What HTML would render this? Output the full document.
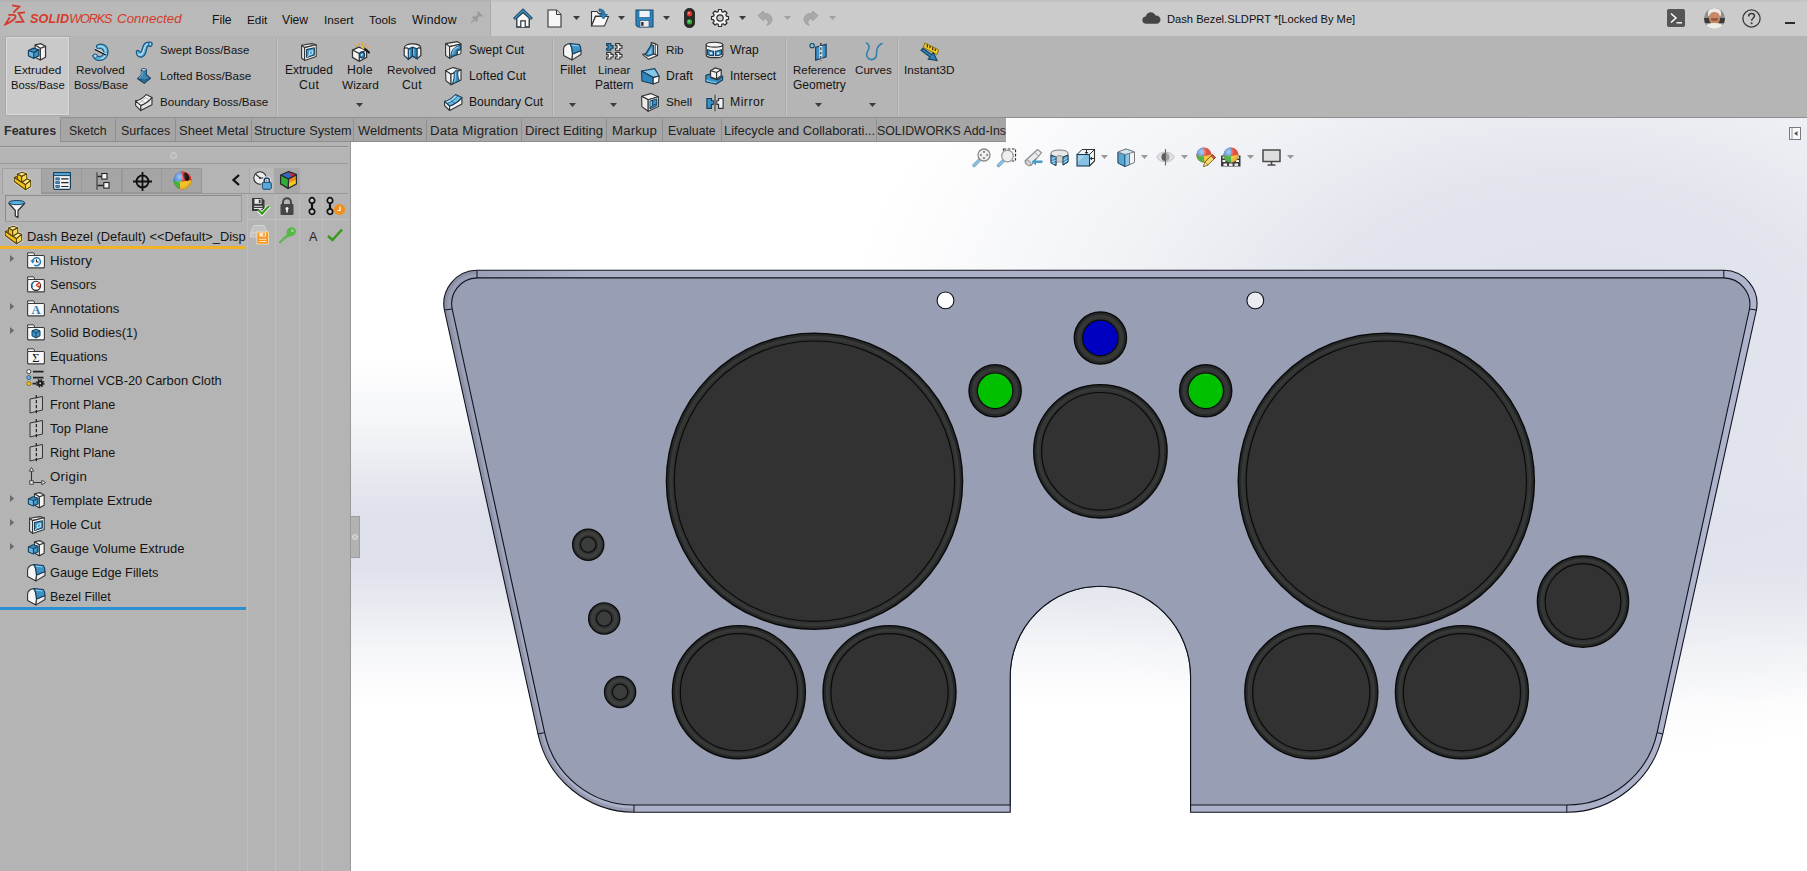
<!DOCTYPE html>
<html><head><meta charset="utf-8"><title>Dash Bezel.SLDPRT - SOLIDWORKS Connected</title>
<style>
html,body{margin:0;padding:0;}
body{width:1807px;height:871px;overflow:hidden;background:#fff;font-family:"Liberation Sans",sans-serif;font-size:12px;color:#111;}
#app{position:relative;width:1807px;height:871px;overflow:hidden;background:#fff;}
#app *{box-sizing:border-box;}
.abs{position:absolute;}
#viewport{position:absolute;left:0;top:0;width:1807px;height:871px;
 background:
  radial-gradient(ellipse 720px 430px at 1570px 330px, rgba(222,225,234,1) 0%, rgba(223,226,235,.9) 35%, rgba(228,231,238,.5) 65%, rgba(255,255,255,0) 100%),
  linear-gradient(to bottom, rgba(223,226,235,0) 355px, rgba(223,226,235,.3) 420px, rgba(223,226,235,.75) 475px, rgba(222,225,235,1) 515px, rgba(222,225,235,1) 565px, rgba(223,226,235,.75) 600px, rgba(223,226,235,.3) 650px, rgba(223,226,235,0) 705px),
  #fff;}
#model{position:absolute;left:0;top:0;}
#titlebar{position:absolute;left:0;top:0;width:1807px;height:36px;background:#cbcbcb;}
#titlebar .left{position:absolute;left:0;top:0;width:491px;height:36px;background:#b9b9b9;}
#titlebar .topstrip{position:absolute;left:0;top:0;width:1807px;height:2px;background:rgba(0,0,0,.035);}
#ribbon{position:absolute;left:0;top:36px;width:1807px;height:82px;background:#b5b5b5;}
#ribbon .bline{position:absolute;left:60px;top:81px;width:1747px;height:1px;background:#8f8f8f;}
#tabs{position:absolute;left:0;top:118px;width:1006px;height:24px;background:#a6a6a6;border-bottom:1px solid #8e8e8e;}
#panel{position:absolute;left:0;top:142px;width:351px;height:729px;background:#b4b4b4;border-right:1px solid #999;}
.t{position:absolute;white-space:nowrap;}
svg.abs{overflow:visible;}
svg.tx{overflow:visible;font-family:"Liberation Sans",sans-serif;}
svg.tx text{white-space:pre;}

</style></head>
<body>
<div id="app">
<div id="viewport">
<svg id="model" width="1807" height="871" viewBox="0 0 1807 871">
<defs><linearGradient id="band" x1="0" y1="0" x2="1" y2="0"><stop offset="0" stop-color="#989db4"/><stop offset="0.075" stop-color="#a3a7bf"/><stop offset="0.11" stop-color="#acb0c8"/><stop offset="0.9" stop-color="#acb0c8"/><stop offset="1" stop-color="#b0b4cc"/></linearGradient></defs>
<clipPath id="oc"><path d="M444.4,310 A33.5,33.5 0 0 1 477,270.3 L1723.8000000000002,270.3 A33.5,33.5 0 0 1 1756.4,310 L1662.8000000000002,734 A99,99 0 0 1 1566.8000000000002,812.3 L1190.6000000000001,812.3 L1190.6000000000001,676.4 A90.20000000000005,90.20000000000005 0 0 0 1010.2,676.4 L1010.2,812.3 L634,812.3 A99,99 0 0 1 538,734 Z"/></clipPath><path d="M444.4,310 A33.5,33.5 0 0 1 477,270.3 L1723.8000000000002,270.3 A33.5,33.5 0 0 1 1756.4,310 L1662.8000000000002,734 A99,99 0 0 1 1566.8000000000002,812.3 L1190.6000000000001,812.3 L1190.6000000000001,676.4 A90.20000000000005,90.20000000000005 0 0 0 1010.2,676.4 L1010.2,812.3 L634,812.3 A99,99 0 0 1 538,734 Z" fill="url(#band)"/><path d="M477,270.3 A33.5,33.5 0 0 0 444.4,310 L538,734 A99,99 0 0 0 634,812.3" fill="none" stroke="#7d839a" stroke-opacity=".5" stroke-width="7" clip-path="url(#oc)"/><path d="M444.4,310 A33.5,33.5 0 0 1 477,270.3 L1723.8000000000002,270.3 A33.5,33.5 0 0 1 1756.4,310 L1662.8000000000002,734 A99,99 0 0 1 1566.8000000000002,812.3 L1190.6000000000001,812.3 L1190.6000000000001,676.4 A90.20000000000005,90.20000000000005 0 0 0 1010.2,676.4 L1010.2,812.3 L634,812.3 A99,99 0 0 1 538,734 Z" fill="none" stroke="#10131c" stroke-width="1.1"/><path d="M452.2,309 A26,26 0 0 1 477,277.9 L1723.8000000000002,277.9 A26.6,26.6 0 0 1 1749.5000000000002,309 L1657.1000000000004,732.6 A92.2,92.2 0 0 1 1566.8000000000002,805 L1190.6000000000001,805 L1190.6000000000001,676.4 A90.20000000000005,90.20000000000005 0 0 0 1010.2,676.4 L1010.2,805 L634,805 A91.5,91.5 0 0 1 544.6,732.6 Z" fill="#989eb3" stroke="#10131c" stroke-width="1.1"/><g stroke="#10131c" stroke-width="1" fill="none"><path d="M444.4,310 L452.2,309 M1756.4,310 L1749.5000000000002,309"/><path d="M477,270.3 L477,277.9 M1723.8000000000002,270.3 L1723.8000000000002,277.9"/><path d="M538,734 L544.6,732.6 M1662.8000000000002,734 L1657.1000000000004,732.6"/><path d="M634,812.3 L634,805 M1566.8000000000002,812.3 L1566.8000000000002,805"/></g><circle cx="814.5" cy="481.2" r="148" fill="#313332" stroke="#0a0a0a" stroke-width="1.6"/><circle cx="814.5" cy="481.2" r="146.4" fill="none" stroke="#232524" stroke-width="1.8" opacity=".8"/><circle cx="814.5" cy="481.2" r="143.79999999999998" fill="none" stroke="#3f4140" stroke-width="2.4" opacity=".45"/><circle cx="814.5" cy="481.2" r="140.2" fill="#323232" stroke="#0a0a0a" stroke-width="1.2"/><circle cx="1386.3000000000002" cy="481.2" r="148" fill="#313332" stroke="#0a0a0a" stroke-width="1.6"/><circle cx="1386.3000000000002" cy="481.2" r="146.4" fill="none" stroke="#232524" stroke-width="1.8" opacity=".8"/><circle cx="1386.3000000000002" cy="481.2" r="143.79999999999998" fill="none" stroke="#3f4140" stroke-width="2.4" opacity=".45"/><circle cx="1386.3000000000002" cy="481.2" r="140.2" fill="#323232" stroke="#0a0a0a" stroke-width="1.2"/><circle cx="1100.4" cy="451.3" r="66.6" fill="#313332" stroke="#0a0a0a" stroke-width="1.6"/><circle cx="1100.4" cy="451.3" r="65.0" fill="none" stroke="#232524" stroke-width="1.8" opacity=".8"/><circle cx="1100.4" cy="451.3" r="62.4" fill="none" stroke="#3f4140" stroke-width="2.4" opacity=".45"/><circle cx="1100.4" cy="451.3" r="58.8" fill="#323232" stroke="#0a0a0a" stroke-width="1.2"/><circle cx="738.9" cy="692.2" r="66.4" fill="#313332" stroke="#0a0a0a" stroke-width="1.6"/><circle cx="738.9" cy="692.2" r="64.80000000000001" fill="none" stroke="#232524" stroke-width="1.8" opacity=".8"/><circle cx="738.9" cy="692.2" r="62.2" fill="none" stroke="#3f4140" stroke-width="2.4" opacity=".45"/><circle cx="738.9" cy="692.2" r="58.6" fill="#323232" stroke="#0a0a0a" stroke-width="1.2"/><circle cx="1461.9" cy="692.2" r="66.4" fill="#313332" stroke="#0a0a0a" stroke-width="1.6"/><circle cx="1461.9" cy="692.2" r="64.80000000000001" fill="none" stroke="#232524" stroke-width="1.8" opacity=".8"/><circle cx="1461.9" cy="692.2" r="62.2" fill="none" stroke="#3f4140" stroke-width="2.4" opacity=".45"/><circle cx="1461.9" cy="692.2" r="58.6" fill="#323232" stroke="#0a0a0a" stroke-width="1.2"/><circle cx="889.5" cy="692.2" r="66.4" fill="#313332" stroke="#0a0a0a" stroke-width="1.6"/><circle cx="889.5" cy="692.2" r="64.80000000000001" fill="none" stroke="#232524" stroke-width="1.8" opacity=".8"/><circle cx="889.5" cy="692.2" r="62.2" fill="none" stroke="#3f4140" stroke-width="2.4" opacity=".45"/><circle cx="889.5" cy="692.2" r="58.6" fill="#323232" stroke="#0a0a0a" stroke-width="1.2"/><circle cx="1311.3000000000002" cy="692.2" r="66.4" fill="#313332" stroke="#0a0a0a" stroke-width="1.6"/><circle cx="1311.3000000000002" cy="692.2" r="64.80000000000001" fill="none" stroke="#232524" stroke-width="1.8" opacity=".8"/><circle cx="1311.3000000000002" cy="692.2" r="62.2" fill="none" stroke="#3f4140" stroke-width="2.4" opacity=".45"/><circle cx="1311.3000000000002" cy="692.2" r="58.6" fill="#323232" stroke="#0a0a0a" stroke-width="1.2"/><circle cx="1583" cy="601.6" r="45.5" fill="#313332" stroke="#0a0a0a" stroke-width="1.6"/><circle cx="1583" cy="601.6" r="43.9" fill="none" stroke="#232524" stroke-width="1.8" opacity=".8"/><circle cx="1583" cy="601.6" r="41.400000000000006" fill="none" stroke="#3f4140" stroke-width="2.4" opacity=".45"/><circle cx="1583" cy="601.6" r="37.9" fill="#323232" stroke="#0a0a0a" stroke-width="1.2"/><circle cx="1100.4" cy="338" r="26" fill="#313332" stroke="#0a0a0a" stroke-width="1.6"/><circle cx="1100.4" cy="338" r="24.4" fill="none" stroke="#232524" stroke-width="1.8" opacity=".8"/><circle cx="1100.4" cy="338" r="21.6" fill="none" stroke="#3f4140" stroke-width="2.6" opacity=".45"/><circle cx="1100.4" cy="338" r="17.8" fill="#0000c0" stroke="#0a0a0a" stroke-width="1.2"/><circle cx="995.1" cy="390.8" r="26" fill="#313332" stroke="#0a0a0a" stroke-width="1.6"/><circle cx="995.1" cy="390.8" r="24.4" fill="none" stroke="#232524" stroke-width="1.8" opacity=".8"/><circle cx="995.1" cy="390.8" r="21.6" fill="none" stroke="#3f4140" stroke-width="2.6" opacity=".45"/><circle cx="995.1" cy="390.8" r="17.8" fill="#00c000" stroke="#0a0a0a" stroke-width="1.2"/><circle cx="1205.7000000000003" cy="390.8" r="26" fill="#313332" stroke="#0a0a0a" stroke-width="1.6"/><circle cx="1205.7000000000003" cy="390.8" r="24.4" fill="none" stroke="#232524" stroke-width="1.8" opacity=".8"/><circle cx="1205.7000000000003" cy="390.8" r="21.6" fill="none" stroke="#3f4140" stroke-width="2.6" opacity=".45"/><circle cx="1205.7000000000003" cy="390.8" r="17.8" fill="#00c000" stroke="#0a0a0a" stroke-width="1.2"/><circle cx="588.2" cy="544.7" r="15.6" fill="#2f3130" stroke="#0b0b0b" stroke-width="1.3"/><circle cx="588.2" cy="544.7" r="11.6" fill="none" stroke="#434544" stroke-width="3.4" opacity=".7"/><circle cx="588.2" cy="544.7" r="7.7" fill="#3b3d3c" stroke="#0b0b0b" stroke-width="1.1"/><circle cx="604.2" cy="618.5" r="15.6" fill="#2f3130" stroke="#0b0b0b" stroke-width="1.3"/><circle cx="604.2" cy="618.5" r="11.6" fill="none" stroke="#434544" stroke-width="3.4" opacity=".7"/><circle cx="604.2" cy="618.5" r="7.7" fill="#3b3d3c" stroke="#0b0b0b" stroke-width="1.1"/><circle cx="620.1" cy="692" r="15.6" fill="#2f3130" stroke="#0b0b0b" stroke-width="1.3"/><circle cx="620.1" cy="692" r="11.6" fill="none" stroke="#434544" stroke-width="3.4" opacity=".7"/><circle cx="620.1" cy="692" r="7.7" fill="#3b3d3c" stroke="#0b0b0b" stroke-width="1.1"/><circle cx="945.5" cy="300.4" r="8.4" fill="#fdfdfe" stroke="#10131c" stroke-width="1.1"/><circle cx="1255.3000000000002" cy="300.4" r="8.4" fill="#e9ebf1" stroke="#10131c" stroke-width="1.1"/>
</svg>
<div id="hud"><svg class="abs" style="left:972px;top:147.5px;" width="19" height="19" viewBox="0 0 19 19"><path d="M8,11.5 L2,17.5" stroke="#6f9fbd" stroke-width="3.4" stroke-linecap="round"/><path d="M8,11.5 L2,17.5" stroke="#8fc3e0" stroke-width="2" stroke-linecap="round"/><circle cx="12" cy="7" r="6" fill="#f1f1f1" stroke="#8a8a8a" stroke-width="1.3"/><path d="M12,2.8l1.4,1.6h-2.8zM12,11.2l1.4-1.6h-2.8zM7.8,7l1.6-1.4v2.8zM16.2,7l-1.6-1.4v2.8z" fill="#4a4a4a"/></svg>
<svg class="abs" style="left:996.5px;top:147.5px;" width="20" height="19" viewBox="0 0 20 19"><rect x="6.5" y="1" width="12" height="12" fill="none" stroke="#333" stroke-width="1.2" stroke-dasharray="2.6,1.6"/><path d="M7,12 L1.5,17.5" stroke="#6f9fbd" stroke-width="3.4" stroke-linecap="round"/><path d="M7,12 L1.5,17.5" stroke="#8fc3e0" stroke-width="2" stroke-linecap="round"/><circle cx="10.5" cy="8" r="5.8" fill="#eeeeee" stroke="#9a9a9a" stroke-width="1.3"/></svg>
<svg class="abs" style="left:1024px;top:147.5px;" width="19" height="19" viewBox="0 0 19 19"><path d="M1,13 L13.5,1.5 L17.5,4.5 L7,17.5 C4,18 1,16 1,13Z" fill="#ececec" stroke="#8a8a8a" stroke-width="1.1"/><path d="M10.5,4.2L14.5,8" stroke="#9a9a9a" stroke-width="1"/><ellipse cx="4.2" cy="14.8" rx="2.2" ry="3.2" transform="rotate(-40 4.2 14.8)" fill="#d2d2d2" stroke="#8a8a8a" stroke-width=".8"/><path d="M18.5,12.5H12V10L7.5,13.8L12,17.5V15H18.5Z" fill="#4b9cc7"/></svg>
<svg class="abs" style="left:1049.5px;top:148px;" width="19" height="18.5" viewBox="0 0 19 18.5"><path d="M1,5 C1,1 18,1 18,5 V14 L13,17 V9 C11,7.5 8,7.5 6,9 V17.5 L1,15Z" fill="#e8e8e8" stroke="#7a7a7a" stroke-width="1"/><path d="M6,9 C8,7.5 11,7.5 13,9 V15 C11,13.5 8,13.5 6,15Z" fill="#d0d0d0" stroke="#8a8a8a" stroke-width=".7"/><path d="M1,7 L6,9 V17.5 L1,15Z M13,9 L18,7 V14 L13,17Z" fill="#4f9ec9" stroke="#163f5d" stroke-width="1"/><path d="M1.5,11L5.5,9.5M1.5,14L5.5,12.5M2.5,16L5.5,15M13.5,12L17.5,9.5M13.5,15L17.5,12.5" stroke="#b8dcf0" stroke-width="1"/></svg>
<svg class="abs" style="left:1075.5px;top:147.5px;" width="19.5" height="19" viewBox="0 0 19.5 19"><path d="M6,1.5H18.5V13L13.5,18" fill="none" stroke="#333" stroke-width="1.1"/><path d="M1,6.5 L6,1.5 M13.5,6.5L18.5,1.5" stroke="#333" stroke-width="1"/><rect x="1" y="6.5" width="12.5" height="11.5" fill="#86c0e2" stroke="#163f5d" stroke-width="1.1"/><path d="M2,7.5H9L2,14Z" fill="#b4daf0" opacity=".7"/><path d="M10.5,2V5.5M9,4l1.5,1.8L12,4M18,10.5H14.5M16,9l-1.8,1.5L16,12" fill="none" stroke="#333" stroke-width="1"/></svg>
<svg class="abs" style="left:1100.5px;top:155px" width="7" height="4" viewBox="0 0 7 4"><path d="M0,0H7L3.5,4Z" fill="#999"/></svg>
<svg class="abs" style="left:1116.5px;top:147.5px;" width="18.5" height="19.5" viewBox="0 0 18.5 19.5"><path d="M1,4 L9,1 L17.5,4 V14.5 L8,18.5 L1,15Z" fill="#f3f3f3" stroke="#7a7a7a" stroke-width="1"/><path d="M1,4 L8,6.5 V18.5 L1,15Z" fill="#5aa7d3" stroke="#163f5d" stroke-width=".9"/><path d="M8,6.5 L12.5,5 V16.6 L8,18.5Z" fill="#8fc6e6" stroke="#163f5d" stroke-width=".6"/><path d="M1,4L9,1L17.5,4L8,6.5Z" fill="#cfe6f4" stroke="#7a7a7a" stroke-width=".9"/></svg>
<svg class="abs" style="left:1140.5px;top:155px" width="7" height="4" viewBox="0 0 7 4"><path d="M0,0H7L3.5,4Z" fill="#999"/></svg>
<svg class="abs" style="left:1156px;top:148.5px;" width="19" height="17" viewBox="0 0 19 17"><path d="M.8,8 C4,1.5 15,1.5 18.2,8 C15,14.5 4,14.5 .8,8Z" fill="#e2e2e2" stroke="#bdbdbd" stroke-width="1"/><circle cx="9.5" cy="8" r="4" fill="#a2a2a2"/><path d="M9.5,4A4,4 0 0 0 9.5,12Z" fill="#5e5e5e"/><path d="M9.5,0V16.5" stroke="#666" stroke-width="1.1"/></svg>
<svg class="abs" style="left:1180.5px;top:155px" width="7" height="4" viewBox="0 0 7 4"><path d="M0,0H7L3.5,4Z" fill="#999"/></svg>
<svg class="abs" style="left:1195.5px;top:147px;" width="20" height="20" viewBox="0 0 20 20"><defs><clipPath id="b1"><circle cx="8" cy="8" r="7.6"/></clipPath></defs><g clip-path="url(#b1)"><rect width="16" height="16" fill="#e04a3f"/><path d="M0,0H8V8.5H0Z" fill="#4f8fdd"/><path d="M0,8.5H8V16H0Z" fill="#4cb24a"/><path d="M8,9L16,7.5V16H8Z" fill="#f0c63a"/></g><circle cx="8" cy="8" r="7.6" fill="url(#bs)"/><path d="M7.5,19.5 L9,15 L16.5,7.5 L19.5,10.5 L12,18Z" fill="#f3d86b" stroke="#7a5a1a" stroke-width=".9"/><path d="M15,9l3,3 1.5-1.5-3-3z" fill="#d9534f" stroke="#7a2a2a" stroke-width=".6"/><path d="M7.5,19.5L9,15l3,3z" fill="#f6e3b8" stroke="#7a5a1a" stroke-width=".6"/></svg>
<svg class="abs" style="left:1221px;top:147px;" width="19.5" height="19.5" viewBox="0 0 19.5 19.5"><rect x="0" y="8.5" width="19.5" height="11" fill="#3a3a3a"/><g fill="#f2f2f2"><rect x="1.5" y="9.5" width="3" height="2"/><rect x="15" y="9.5" width="3" height="2"/><rect x="1.5" y="13" width="3" height="2"/><rect x="15" y="13" width="3" height="2"/><rect x="2.5" y="16.5" width="3.6" height="2.4"/><rect x="8" y="16.5" width="3.6" height="2.4"/><rect x="13.5" y="16.5" width="3.6" height="2.4"/></g><g transform="translate(2,0)"><defs><clipPath id="b2"><circle cx="8" cy="8" r="7.6"/></clipPath></defs><g clip-path="url(#b2)"><rect width="16" height="16" fill="#e04a3f"/><path d="M0,0H8V8.5H0Z" fill="#4f8fdd"/><path d="M0,8.5H8V16H0Z" fill="#4cb24a"/><path d="M8,9L16,7.5V16H8Z" fill="#f0c63a"/></g><circle cx="8" cy="8" r="7.6" fill="url(#bs)"/></g></svg>
<svg class="abs" style="left:1246.5px;top:155px" width="7" height="4" viewBox="0 0 7 4"><path d="M0,0H7L3.5,4Z" fill="#999"/></svg>
<svg class="abs" style="left:1262px;top:148.5px;" width="19" height="17" viewBox="0 0 19 17"><rect x="1" y="1" width="17" height="11.5" fill="#dedede" stroke="#4a4a4a" stroke-width="1.5"/><path d="M9.5,12.5V15.5M5.5,16H13.5" stroke="#4a4a4a" stroke-width="1.7"/></svg>
<svg class="abs" style="left:1286.5px;top:155px" width="7" height="4" viewBox="0 0 7 4"><path d="M0,0H7L3.5,4Z" fill="#999"/></svg>
<svg class="abs" style="left:1789px;top:127px;" width="12" height="13" viewBox="0 0 12 13"><rect x=".5" y=".5" width="11" height="12" fill="#fafafa" stroke="#7a7a7a" stroke-width="1"/><path d="M3,1V12.5" stroke="#9a9a9a" stroke-width="1"/><path d="M8.5,4L5,6.5L8.5,9Z" fill="#555"/></svg></div>
</div>
<div id="titlebar"><div class="left"></div><div class="topstrip"></div><div class="abs" style="left:490px;top:2px;width:1px;height:34px;background:#a9a9a9"></div>
<svg class="abs" style="left:0px;top:0px;" width="30" height="30" viewBox="0 0 30 30"><g fill="none" stroke="#d5392a" stroke-width="1.8" stroke-linejoin="miter" stroke-linecap="butt">
<path d="M12,5.3 L19.4,6.6 L13.4,12.6"/><path d="M25,12.4 L18.6,13.1 L23.4,21.7 L15.3,22.2"/><path d="M8.3,14.9 L13.5,14.9 C16.6,15.2 16,18 13,20.3 C10.5,22.2 7.5,23.6 5.4,24.3 L9.8,17.3"/></g></svg>
<svg class="abs tx" style="left:29.5px;top:22.6px" width="1" height="1"><text x="0" y="0" font-size="12.6" font-style="italic" fill="#d5392a"><tspan x="0" font-weight="bold" textLength="39" lengthAdjust="spacing">SOLID</tspan><tspan x="39.3" textLength="43.2" lengthAdjust="spacing">WORKS</tspan></text></svg>
<svg class="abs tx " style="left:116.7px;top:22.6px;" width="1" height="1"><text x="0" y="0" font-size="13.38" fill="#d5392a" font-style="italic" textLength="64.7" lengthAdjust="spacing">Connected</text></svg>
<svg class="abs tx " style="left:212.3px;top:23.7px;" width="1" height="1"><text x="0" y="0" font-size="12.16" fill="#111" textLength="19.6" lengthAdjust="spacing">File</text></svg>
<svg class="abs tx " style="left:246.8px;top:23.7px;" width="1" height="1"><text x="0" y="0" font-size="11.78" fill="#111" textLength="20.3" lengthAdjust="spacing">Edit</text></svg>
<svg class="abs tx " style="left:282.4px;top:23.7px;" width="1" height="1"><text x="0" y="0" font-size="12.14" fill="#111" textLength="26.1" lengthAdjust="spacing">View</text></svg>
<svg class="abs tx " style="left:323.5px;top:23.7px;" width="1" height="1"><text x="0" y="0" font-size="11.83" fill="#111" textLength="29.6" lengthAdjust="spacing">Insert</text></svg>
<svg class="abs tx " style="left:369.0px;top:23.7px;" width="1" height="1"><text x="0" y="0" font-size="11.78" fill="#111" textLength="27.5" lengthAdjust="spacing">Tools</text></svg>
<svg class="abs tx " style="left:411.8px;top:23.7px;" width="1" height="1"><text x="0" y="0" font-size="12.24" fill="#111" textLength="44.7" lengthAdjust="spacing">Window</text></svg>
<svg class="abs" style="left:470px;top:10px;" width="14" height="14" viewBox="0 0 14 14"><path d="M8,1 L13,6 L11.5,6.8 L9.5,6 L7.5,8.5 L7.8,11 L6.5,12 L2,7.5 L3,6.2 L5.5,6.5 L8,4.5 L7.2,2.5Z" fill="#9a9a9a"/><path d="M4.5,9.5L1,13" stroke="#9a9a9a" stroke-width="1.3"/></svg>
<svg class="abs" style="left:513px;top:8.5px;" width="20" height="19" viewBox="0 0 20 19"><path d="M3.8,9 L10,3.5 L16.2,9 V18 H3.8Z" fill="#f7f7f7" stroke="#26333c" stroke-width="1.3"/><path d="M1,10 L10,1.2 L19,10" fill="none" stroke="#174a6b" stroke-width="2.8" stroke-linejoin="miter"/><path d="M1.6,9.6 L10,1.6 L18.4,9.6" fill="none" stroke="#4a9bc9" stroke-width="1.1" stroke-linejoin="miter"/><path d="M7.8,18V11.8H12.2V18" fill="#fff" stroke="#26333c" stroke-width="1.2"/></svg>
<svg class="abs" style="left:546.5px;top:8.5px;" width="15" height="19" viewBox="0 0 15 19"><path d="M1,1 H9.5 L14,5.5 V18 H1Z" fill="#f6f6f6" stroke="#333" stroke-width="1.1"/><path d="M9.5,1V5.5H14" fill="#ddd" stroke="#333" stroke-width="1"/></svg>
<svg class="abs" style="left:572.8px;top:16px" width="7" height="4" viewBox="0 0 7 4"><path d="M0,0H7L3.5,4Z" fill="#3c3c3c"/></svg>
<svg class="abs" style="left:589.5px;top:8px;" width="19" height="19" viewBox="0 0 19 19"><path d="M1.5,3.5 H7 L8.5,5.5 H13 V8 H5.5 L1.5,18Z" fill="#f4f4f4" stroke="#333" stroke-width="1.1"/><path d="M5.5,8.5 H18.5 L14.5,18 H1.5Z" fill="#fafafa" stroke="#333" stroke-width="1.1"/><path d="M9,1 C13,1 15,3 15,6.5 L17.5,6.5 L13.5,11 L9.5,6.5 L12,6.5 C12,4.5 11,3.5 9,3.2Z" fill="#2a7fb8" stroke="#1b5377" stroke-width=".7"/></svg>
<svg class="abs" style="left:617.5px;top:16px" width="7" height="4" viewBox="0 0 7 4"><path d="M0,0H7L3.5,4Z" fill="#3c3c3c"/></svg>
<svg class="abs" style="left:634.5px;top:8.5px;" width="19" height="19" viewBox="0 0 19 19"><path d="M1,1 H18 V18 H3 L1,16Z" fill="#2e86c1" stroke="#1b4f72" stroke-width="1.1"/><rect x="4" y="1.5" width="11" height="7" fill="#eef3f7" stroke="#1b4f72" stroke-width=".6"/><rect x="5" y="11.5" width="9" height="6.5" fill="#e9e9e9" stroke="#1b4f72" stroke-width=".6"/><rect x="6.3" y="13" width="2.2" height="3.8" fill="#222"/></svg>
<svg class="abs" style="left:662.5px;top:16px" width="7" height="4" viewBox="0 0 7 4"><path d="M0,0H7L3.5,4Z" fill="#3c3c3c"/></svg>
<svg class="abs" style="left:683.5px;top:7.5px;" width="11" height="20" viewBox="0 0 11 20"><rect x=".5" y=".5" width="10" height="19" rx="4.5" fill="#2b2b26" stroke="#1a1a1a" stroke-width=".8"/><circle cx="5.5" cy="5.7" r="2.6" fill="#e8332c"/><circle cx="5.5" cy="13.8" r="2.6" fill="#2fae3a"/><circle cx="5" cy="5" r=".9" fill="#ff9a90"/><circle cx="5" cy="13.1" r=".9" fill="#9fe8a5"/></svg>
<svg class="abs" style="left:710.5px;top:9px;" width="18" height="18" viewBox="0 0 18 18"><path d="M17.48,7.55 L17.48,10.45 L15.34,10.82 L14.77,12.20 L16.02,13.96 L13.96,16.02 L12.20,14.77 L10.82,15.34 L10.45,17.48 L7.55,17.48 L7.18,15.34 L5.80,14.77 L4.04,16.02 L1.98,13.96 L3.23,12.20 L2.66,10.82 L0.52,10.45 L0.52,7.55 L2.66,7.18 L3.23,5.80 L1.98,4.04 L4.04,1.98 L5.80,3.23 L7.18,2.66 L7.55,0.52 L10.45,0.52 L10.82,2.66 L12.20,3.23 L13.96,1.98 L16.02,4.04 L14.77,5.80 L15.34,7.18 Z" fill="#f2f2f2" stroke="#2a2a2a" stroke-width="1.2" stroke-linejoin="round"/><circle cx="9" cy="9" r="3.2" fill="#cbcbcb" stroke="#2a2a2a" stroke-width="1.2"/></svg>
<svg class="abs" style="left:738.5px;top:16px" width="7" height="4" viewBox="0 0 7 4"><path d="M0,0H7L3.5,4Z" fill="#3c3c3c"/></svg>
<svg class="abs" style="left:757px;top:9.5px;" width="17" height="16" viewBox="0 0 17 16"><path d="M1,5.5 L6.5,1 L6.5,3.5 C12,3 15.5,6 15,10 C14.5,13 12,15 9.5,15.5 C12,13 12,9.5 6.5,8.5 L6.5,11Z" fill="#a9a9a9" stroke="#9b9b9b" stroke-width=".8"/></svg>
<svg class="abs" style="left:783.5px;top:16px" width="7" height="4" viewBox="0 0 7 4"><path d="M0,0H7L3.5,4Z" fill="#a0a0a0"/></svg>
<svg class="abs" style="left:801.5px;top:9.5px;" width="17" height="16" viewBox="0 0 17 16"><path d="M16,5.5 L10.5,1 L10.5,3.5 C5,3 1.5,6 2,10 C2.5,13 5,15 7.5,15.5 C5,13 5,9.5 10.5,8.5 L10.5,11Z" fill="#a9a9a9" stroke="#9b9b9b" stroke-width=".8"/></svg>
<svg class="abs" style="left:828.5px;top:16px" width="7" height="4" viewBox="0 0 7 4"><path d="M0,0H7L3.5,4Z" fill="#a0a0a0"/></svg>
<svg class="abs" style="left:1141.5px;top:11.5px;" width="19" height="12" viewBox="0 0 19 12"><path d="M4.5,11.8 C1.8,11.8 .3,10 .3,8 C.3,6 1.8,4.6 3.8,4.6 C4.2,2 6.3,.3 8.8,.3 C11,.3 12.8,1.6 13.6,3.6 C16.3,3.4 18.5,5.2 18.5,7.8 C18.5,10 16.8,11.8 14.5,11.8Z" fill="#454545"/></svg>
<svg class="abs tx " style="left:1166.9px;top:23.2px;" width="1" height="1"><text x="0" y="0" font-size="11.16" fill="#111" textLength="188.2" lengthAdjust="spacing">Dash Bezel.SLDPRT *[Locked By Me]</text></svg>
<svg class="abs" style="left:1667px;top:9px;" width="18" height="18" viewBox="0 0 18 18"><rect x="0" y="0" width="18" height="18" rx="1.8" fill="#555"/><path d="M4,4.5 L9,9 L4,13.5" fill="none" stroke="#fff" stroke-width="1.5"/><path d="M9.5,13.8H15" stroke="#fff" stroke-width="1.4"/></svg>
<div class="abs" style="left:1703.5px;top:7.5px;width:21px;height:21px;border-radius:50%;overflow:hidden;background:#8f8f88">
<div class="abs" style="left:0;top:10px;width:21px;height:5px;background:#3b3a36"></div>
<div class="abs" style="left:4px;top:0px;width:13px;height:9px;border-radius:50% 50% 30% 30%;background:#eceae6"></div>
<div class="abs" style="left:5px;top:4.5px;width:11px;height:12px;border-radius:45%;background:#c98a68"></div>
<div class="abs" style="left:7px;top:10.5px;width:7px;height:3px;border-radius:0 0 50% 50%;background:#9d5a45"></div>
<div class="abs" style="left:1px;top:15px;width:19px;height:8px;border-radius:50% 50% 0 0;background:#efece6"></div>
</div>
<svg class="abs" style="left:1742px;top:8.5px;" width="19" height="19" viewBox="0 0 19 19"><circle cx="9.5" cy="9.5" r="8.6" fill="none" stroke="#3a3a3a" stroke-width="1.3"/><path d="M6.6,7.4 C6.6,5.4 8,4.4 9.6,4.4 C11.3,4.4 12.5,5.5 12.5,7 C12.5,8.8 9.6,9.4 9.6,11.8" fill="none" stroke="#3a3a3a" stroke-width="1.5"/><circle cx="9.6" cy="14.3" r="1" fill="#3a3a3a"/></svg>
<div class="abs" style="left:1785px;top:21.5px;width:10px;height:2px;background:#2a2a2a"></div></div>
<div id="ribbon"><div class="bline"></div>
<div class="abs" style="left:6px;top:1px;width:63px;height:78px;background:#c9c9c9;border:1px solid #dadada;box-shadow:0 0 0 1px #a9a9a9"></div>
<div class="abs" style="left:277px;top:2px;width:1px;height:78px;background:#c4c4c4"></div><div class="abs" style="left:276px;top:2px;width:1px;height:78px;background:#a9a9a9"></div>
<div class="abs" style="left:553px;top:2px;width:1px;height:78px;background:#c4c4c4"></div><div class="abs" style="left:552px;top:2px;width:1px;height:78px;background:#a9a9a9"></div>
<div class="abs" style="left:786px;top:2px;width:1px;height:78px;background:#c4c4c4"></div><div class="abs" style="left:785px;top:2px;width:1px;height:78px;background:#a9a9a9"></div>
<div class="abs" style="left:897.5px;top:2px;width:1px;height:78px;background:#c4c4c4"></div><div class="abs" style="left:896.5px;top:2px;width:1px;height:78px;background:#a9a9a9"></div>
<svg class="abs" style="left:27px;top:6.5px;" width="20" height="19" viewBox="0 0 20 20"><path d="M8,2 L14,0.8 L19,3.5 L19,15 L13.5,18 L8,15Z" fill="#f4f4f4" stroke="#333333" stroke-width="1.3"/><path d="M13.5,5.5V18M8,2L13.5,5.5L19,3.5" fill="none" stroke="#333333" stroke-width="1.3"/>
<path d="M1,8 L6,5.5 L12,7 L12,13.5 L6.5,16 L1,13.5Z" fill="#3d92c6" stroke="#163f5d" stroke-width="1.3"/><path d="M1,8L6.5,10L12,7M6.5,10V16" fill="none" stroke="#163f5d" stroke-width="1.3"/><path d="M1.6,8.6L6,10.3V15.2L1.6,13.2Z" fill="#86c6e6" opacity=".7"/></svg>
<svg class="abs tx " style="left:13.8px;top:37.6px;" width="1" height="1"><text x="0" y="0" font-size="11.82" fill="#141414" textLength="47.3" lengthAdjust="spacing">Extruded</text></svg><svg class="abs tx " style="left:10.8px;top:52.6px;" width="1" height="1"><text x="0" y="0" font-size="11.28" fill="#141414" textLength="53.7" lengthAdjust="spacing">Boss/Base</text></svg>
<svg class="abs" style="left:91.6px;top:6.799999999999997px;" width="17" height="18.4" viewBox="0 0 17 18.4"><path d="M4.5,2.7 C8,-0.3 14.5,1.2 15.8,6.7 C17,12.2 13,17.7 7.5,17.5 C4,17.4 1.2,15.2 0.8,12.7 C2,10.7 5,11 5.5,13 C7,14.4 10.5,13.7 11.5,10.7 C12.3,7.7 10.5,5.2 8,5.2 C6.5,5.2 5.5,5.8 5,6.7Z" fill="#5fb3e0" stroke="#17577f" stroke-width="1.1" stroke-linejoin="round"/>
<path d="M6.2,3.6C10,2.2 13.5,4.7 13.8,8.7M9,15.6C12,15 13.8,12.6 14.2,10.4" fill="none" stroke="#b9e2f6" stroke-width="1.1"/>
<ellipse cx="3.2" cy="13" rx="2.1" ry="1.9" fill="#a6d9f3" stroke="#17577f" stroke-width=".9"/>
<path d="M2.8,6.3 L14,11.9" stroke="#1a1a1a" stroke-width="1.5"/><path d="M3.3,5.4L14.5,11" stroke="#fff" stroke-width=".7"/></svg>
<svg class="abs tx " style="left:75.5px;top:37.6px;" width="1" height="1"><text x="0" y="0" font-size="11.71" fill="#141414" textLength="48.8" lengthAdjust="spacing">Revolved</text></svg><svg class="abs tx " style="left:73.5px;top:52.6px;" width="1" height="1"><text x="0" y="0" font-size="11.3" fill="#141414" textLength="54.0" lengthAdjust="spacing">Boss/Base</text></svg>
<svg class="abs" style="left:135px;top:4.5px;" width="18.5" height="18.5" viewBox="0 0 20 20"><path d="M1.5,12.5 C1,10.5 3,9.5 4.5,11 C5.5,13 7,12 7.8,9 C8.8,4.5 10,1 14,1.5 C16.5,0.5 19,1.5 18.5,4 C18,6 15.5,6.5 14.5,5 C12.5,5.5 12.8,9 11.5,13 C10,17.5 5.5,18.5 3,16 C2,15 1.7,14 1.5,12.5Z" fill="#5fb3e0" stroke="#17577f" stroke-width="1.3"/><path d="M3,13.5C4,16 7,16 8.5,12.5C10,8 10.5,3.5 14,3" fill="none" stroke="#b9e2f6" stroke-width="1.3"/><ellipse cx="16.5" cy="3.4" rx="1.7" ry="2" fill="#a6d9f3" stroke="#17577f" stroke-width="1"/></svg>
<svg class="abs tx " style="left:159.5px;top:17.8px;" width="1" height="1"><text x="0" y="0" font-size="11.39" fill="#141414" textLength="89.3" lengthAdjust="spacing">Swept Boss/Base</text></svg>
<svg class="abs" style="left:136px;top:31px;" width="16.5" height="18.5" viewBox="0 0 20 20"><path d="M6.5,2 C7.5,0.5 11.5,0.5 12.5,2 L12.5,8 L17.5,12.5 L10,18.5 L2,13 L6.5,8.5Z" fill="#3a84b4" stroke="#163f5d" stroke-width="1.3"/><ellipse cx="9.5" cy="2.2" rx="2.8" ry="1.3" fill="#e8f2f8" stroke="#163f5d" stroke-width=".7"/><path d="M2,13L10,15L17.5,12.5" fill="none" stroke="#163f5d" stroke-width="1"/><path d="M7.2,4V9L3.5,12.6" fill="none" stroke="#86c6e6" stroke-width="1.2"/></svg>
<svg class="abs tx " style="left:159.5px;top:43.8px;" width="1" height="1"><text x="0" y="0" font-size="11.65" fill="#141414" textLength="91.3" lengthAdjust="spacing">Lofted Boss/Base</text></svg>
<svg class="abs" style="left:135.4px;top:57.8px;" width="17.6" height="17.2" viewBox="0 0 17.6 17.2"><path d="M0.6,6.9 L5.8,11.4 L5.8,16.6 L0.6,11.4Z" fill="#eeeeee" stroke="#333333" stroke-width="1.1" stroke-linejoin="round"/>
<path d="M5.8,11.4 C9,10.5 13,8 17,3.4 L17,10.8 L5.8,16.6Z" fill="#e4e4e4" stroke="#333333" stroke-width="1.1" stroke-linejoin="round"/>
<path d="M0.6,6.9 C4,6.5 8,4 11.2,0.6 L17,3.4 C13,8 9,10.5 5.8,11.4Z" fill="#f8f8f8" stroke="#333333" stroke-width="1.1" stroke-linejoin="round"/>
<path d="M3.6,9.2C6.5,8 9,5.5 10.4,3.4 C11.5,4.6 13,5.4 14.6,5.4M6.2,6.4C7.6,7.6 9,8.4 10.6,8.6" fill="none" stroke="#a8a8a8" stroke-width=".9"/></svg>
<svg class="abs tx " style="left:159.5px;top:69.8px;" width="1" height="1"><text x="0" y="0" font-size="11.6" fill="#141414" textLength="108.3" lengthAdjust="spacing">Boundary Boss/Base</text></svg>
<svg class="abs" style="left:300.6px;top:7px;" width="15.8" height="18" viewBox="0 0 15.8 18"><path d="M0.6,2.2 L11,0.6 L15.2,1.8 L3.6,4.6Z" fill="#f6f6f6" stroke="#333333" stroke-width="1.1" stroke-linejoin="round"/>
<path d="M0.6,2.2 L3.6,4.6 L3.6,17.4 L0.6,15Z" fill="#e6e6e6" stroke="#333333" stroke-width="1.1" stroke-linejoin="round"/>
<path d="M3.6,4.6 L15.2,1.8 L15.2,13.6 L3.6,17.4Z" fill="#f6f6f6" stroke="#333333" stroke-width="1.1" stroke-linejoin="round"/>
<path d="M5.6,6.6 L13.3,4.7 L13.3,12 L5.6,14.5Z" fill="#4a9fd0" stroke="#163f5d" stroke-width="1.1" stroke-linejoin="round"/>
<path d="M8.4,8.4 L11.6,7.6 L11.6,10.8 L8.4,11.8Z M5.8,14.2 L8.4,11.8" fill="none" stroke="#c9e8f8" stroke-width=".9"/></svg>
<svg class="abs tx " style="left:284.7px;top:37.6px;" width="1" height="1"><text x="0" y="0" font-size="11.94" fill="#141414" textLength="47.8" lengthAdjust="spacing">Extruded</text></svg><svg class="abs tx " style="left:298.5px;top:52.6px;" width="1" height="1"><text x="0" y="0" font-size="12.24" fill="#141414" textLength="20.0" lengthAdjust="spacing">Cut</text></svg>
<svg class="abs" style="left:350.5px;top:6px;" width="19.5" height="20" viewBox="0 0 20 20"><path d="M1.5,8 L8,5 L16,8 L16,15.5 L8.5,19.5 L1.5,15.5Z" fill="#f4f4f4" stroke="#333333" stroke-width="1.3"/><path d="M1.5,8L8.5,11.5L16,8M8.5,11.5V19.5" fill="none" stroke="#333333" stroke-width="1.3"/><ellipse cx="11.3" cy="13" rx="2.6" ry="3" fill="#3d92c6" stroke="#163f5d" stroke-width="1.3"/><path d="M10.3,13.8L12,12" stroke="#d8eef9" stroke-width="1.15"/>
<path d="M11.5,4.5L18.5,10.5" stroke="#1a1a1a" stroke-width="2.2" stroke-linecap="round"/><path d="M11.2,4.2L13,5.8" stroke="#f1b434" stroke-width="2.2" stroke-linecap="round"/>
<g fill="#f39a1d"><circle cx="5" cy="3.5" r="1"/><circle cx="8.2" cy="2" r="1.1"/><circle cx="11.5" cy="1.3" r=".9"/><circle cx="15" cy="2.2" r="1"/><circle cx="17.5" cy="5" r=".8"/></g><path d="M10.5,2.2l.9,1.5 1.7.2-1.3 1.1.4 1.7-1.6-.9" fill="#f7c948"/></svg>
<svg class="abs tx " style="left:346.8px;top:37.6px;" width="1" height="1"><text x="0" y="0" font-size="12.24" fill="#141414" textLength="25.5" lengthAdjust="spacing">Hole</text></svg><svg class="abs tx " style="left:341.5px;top:52.6px;" width="1" height="1"><text x="0" y="0" font-size="11.83" fill="#141414" textLength="36.8" lengthAdjust="spacing">Wizard</text></svg><svg class="abs" style="left:356.0px;top:66.5px" width="7" height="4" viewBox="0 0 7 4"><path d="M0,0H7L3.5,4Z" fill="#3c3c3c"/></svg>
<svg class="abs" style="left:402.5px;top:7px;" width="19" height="18.5" viewBox="0 0 20 20"><path d="M1,6 C1,2.5 5,1 10,1 C15,1 19,2.5 19,6 L19,13.5 L15,17 L10,14 L5.5,17.5 L1,13.5Z" fill="#f4f4f4" stroke="#333333" stroke-width="1.3"/><path d="M5.5,6.5 L10,4.5 L15,6.5 L15,17 L10,14 L5.5,17.5Z" fill="#2f86ba" stroke="#163f5d" stroke-width="1.3"/><path d="M10,4.5V14" stroke="#163f5d" stroke-width="1.3"/><path d="M1,6C3,4.5 5,5.5 5.5,6.5M19,6C17,4.5 15.5,5.5 15,6.5" fill="none" stroke="#333333" stroke-width="1.3"/><path d="M6.8,7.5V15.5M11.3,6V13.5" stroke="#86c6e6" stroke-width="1.3"/></svg>
<svg class="abs tx " style="left:387.3px;top:37.6px;" width="1" height="1"><text x="0" y="0" font-size="11.71" fill="#141414" textLength="48.8" lengthAdjust="spacing">Revolved</text></svg><svg class="abs tx " style="left:401.9px;top:52.6px;" width="1" height="1"><text x="0" y="0" font-size="12.24" fill="#141414" textLength="19.6" lengthAdjust="spacing">Cut</text></svg>
<svg class="abs" style="left:444.8px;top:4.799999999999997px;" width="16.6" height="18" viewBox="0 0 16.6 18"><path d="M0.6,2.6 L12.5,0.6 L16,3 L4.6,5.6Z" fill="#f6f6f6" stroke="#333333" stroke-width="1.1" stroke-linejoin="round"/>
<path d="M0.6,2.6 L4.6,5.6 L4.6,17.4 L0.6,14.4Z" fill="#e9e9e9" stroke="#333333" stroke-width="1.1" stroke-linejoin="round"/>
<path d="M4.6,5.6 L16,3 L16,8.6 L12.4,9.5 L12.4,13.8 L9.5,14.6 C8,15 6.8,15.8 4.6,17.4Z" fill="#f6f6f6" stroke="#333333" stroke-width="1.1" stroke-linejoin="round"/>
<path d="M5.8,16.4 C5.8,9.5 9,5.6 15.6,4.2 L15.6,8.4 L12.2,9.3 L12.2,13.6 L9.4,14.4 C8,14.8 7,15.4 5.8,16.4Z" fill="#3a8fc2" stroke="#163f5d" stroke-width="1" stroke-linejoin="round"/><path d="M7.4,13.2C7.8,9.6 10,7 13.6,5.8" fill="none" stroke="#86c6e6" stroke-width="1.3"/>
<path d="M12.4,9.6 L15.9,8.7 V12.7 L12.4,13.8Z" fill="#f6f6f6" stroke="#333333" stroke-width="1" stroke-linejoin="round"/></svg>
<svg class="abs tx " style="left:468.5px;top:17.8px;" width="1" height="1"><text x="0" y="0" font-size="11.96" fill="#141414" textLength="55.2" lengthAdjust="spacing">Swept Cut</text></svg>
<svg class="abs" style="left:444.8px;top:30.900000000000006px;" width="16.6" height="18.4" viewBox="0 0 16.6 18.4"><path d="M0.6,3.6 L8,0.6 L16,2.8 L6,7.2Z" fill="#f6f6f6" stroke="#333333" stroke-width="1.1" stroke-linejoin="round"/>
<path d="M0.6,3.6 L6,7.2 L6,17.8 L0.9,13.6Z" fill="#ececec" stroke="#333333" stroke-width="1.1" stroke-linejoin="round"/>
<path d="M6,7.2 L16,2.8 L16,13 L6,17.8Z" fill="#f6f6f6" stroke="#333333" stroke-width="1.1" stroke-linejoin="round"/>
<path d="M9.2,5.8 C9.2,3 12.9,2.2 12.9,4.4 C12.5,8 12.7,10.2 14.4,13.7 L7.4,17 C8.9,13 9.5,9.6 9.2,5.8Z" fill="#3a8fc2" stroke="#163f5d" stroke-width="1" stroke-linejoin="round"/><path d="M10.6,5.4C10.9,9.4 10.4,12.6 9.4,15.2" fill="none" stroke="#86c6e6" stroke-width="1.2"/></svg>
<svg class="abs tx " style="left:468.5px;top:43.8px;" width="1" height="1"><text x="0" y="0" font-size="12.24" fill="#141414" textLength="57.0" lengthAdjust="spacing">Lofted Cut</text></svg>
<svg class="abs" style="left:443.9px;top:57.8px;" width="18.6" height="17.2" viewBox="0 0 18.6 17.2"><path d="M0.6,7.3 L5.6,11.9 L5.6,16.5 L0.6,11.6Z" fill="#ececec" stroke="#333333" stroke-width="1.1" stroke-linejoin="round"/>
<path d="M5.6,11.9 C9,10.9 14,8 17.9,3.6 L17.9,10 L5.6,16.5Z" fill="#f4f4f4" stroke="#333333" stroke-width="1.1" stroke-linejoin="round"/>
<path d="M0.6,7.3 C4,6.9 8,4.1 11.5,0.6 L17.9,3.6 C14,8 9,10.9 5.6,11.9Z" fill="#6cbce6" stroke="#163f5d" stroke-width="1.1" stroke-linejoin="round"/>
<path d="M3.4,9.6C7,8.4 10.5,5.6 13.6,2.2 M6.4,5.6 C7.8,7.6 9.4,8.8 11,9.4" fill="none" stroke="#163f5d" stroke-width=".8" opacity=".8"/><path d="M2.4,8C5.4,7.4 8.6,5 11.6,1.8" fill="none" stroke="#c4e6f7" stroke-width="1.1"/></svg>
<svg class="abs tx " style="left:468.5px;top:69.8px;" width="1" height="1"><text x="0" y="0" font-size="12.13" fill="#141414" textLength="74.2" lengthAdjust="spacing">Boundary Cut</text></svg>
<svg class="abs" style="left:562.8px;top:7.299999999999997px;" width="18.6" height="17.4" viewBox="0 0 18.6 17.4"><path d="M0.6,12.6 L0.6,5.6 C0.9,2.6 4,0.7 7,0.6 C8.5,3 9.3,7 9.5,11 L9,16.9Z" fill="#f6f6f6" stroke="#333333" stroke-width="1.1" stroke-linejoin="round"/>
<path d="M9.5,11 L18,7.5 L18,11.6 L9,16.9Z" fill="#ececec" stroke="#333333" stroke-width="1.1" stroke-linejoin="round"/>
<path d="M7,0.6 L16.4,1.5 C17.5,3 18,5 18,7.5 L9.5,11 C9.3,7 8.5,3 7,0.6Z" fill="#3d92c6" stroke="#163f5d" stroke-width="1.1" stroke-linejoin="round"/><path d="M8.6,2.2L15.5,2.8" stroke="#86c6e6" stroke-width="1.3"/></svg>
<svg class="abs tx " style="left:559.5px;top:37.6px;" width="1" height="1"><text x="0" y="0" font-size="12.24" fill="#141414" textLength="26.0" lengthAdjust="spacing">Fillet</text></svg><svg class="abs" style="left:569.0px;top:66.5px" width="7" height="4" viewBox="0 0 7 4"><path d="M0,0H7L3.5,4Z" fill="#3c3c3c"/></svg>
<svg class="abs" style="left:605.6px;top:7.200000000000003px;" width="16.6" height="16.6" viewBox="0 0 16.6 16.6"><path d="M0.6,0.6h4.3v2h2.2v2.6h-2.2v2h-4.3v-2h1.6v-2.6h-1.6Z" fill="#3d92c6" stroke="#163f5d" stroke-width="1.1" stroke-linejoin="round"/><path d="M9.5,0.6h4.3v2h2.2v2.6h-2.2v2h-4.3v-2h1.6v-2.6h-1.6Z" fill="#f6f6f6" stroke="#333333" stroke-width="1.1" stroke-linejoin="round"/><path d="M0.6,9.4h4.3v2h2.2v2.6h-2.2v2h-4.3v-2h1.6v-2.6h-1.6Z" fill="#f6f6f6" stroke="#333333" stroke-width="1.1" stroke-linejoin="round"/><path d="M9.5,9.4h4.3v2h2.2v2.6h-2.2v2h-4.3v-2h1.6v-2.6h-1.6Z" fill="#f6f6f6" stroke="#333333" stroke-width="1.1" stroke-linejoin="round"/></svg>
<svg class="abs tx " style="left:598.1px;top:37.6px;" width="1" height="1"><text x="0" y="0" font-size="11.65" fill="#141414" textLength="32.4" lengthAdjust="spacing">Linear</text></svg><svg class="abs tx " style="left:594.8px;top:52.6px;" width="1" height="1"><text x="0" y="0" font-size="11.94" fill="#141414" textLength="38.5" lengthAdjust="spacing">Pattern</text></svg><svg class="abs" style="left:610.0px;top:66.5px" width="7" height="4" viewBox="0 0 7 4"><path d="M0,0H7L3.5,4Z" fill="#3c3c3c"/></svg>
<svg class="abs" style="left:642px;top:5.799999999999997px;" width="16.4" height="17.8" viewBox="0 0 16.4 17.8"><path d="M0.6,12.4 L9.2,10.6 L15.6,13.4 L6.4,17.2Z" fill="#f4f4f4" stroke="#333333" stroke-width="1.1" stroke-linejoin="round"/>
<path d="M9.2,0.6 L13.2,1.6 L15.6,3 L15.6,13.4 L13.2,12.4 L9.2,10.6Z" fill="#f4f4f4" stroke="#333333" stroke-width="1.1" stroke-linejoin="round"/><path d="M13.2,1.6V12.4" stroke="#333333" stroke-width="1"/>
<path d="M3.2,12.6 L9.4,2.6 L11.4,3.4 L11.4,12.2 L6,14.2Z" fill="#3d92c6" stroke="#163f5d" stroke-width="1.1" stroke-linejoin="round"/><path d="M5.4,12.8L9.6,5.6V11.4Z" fill="#86c6e6"/></svg>
<svg class="abs tx " style="left:665.5px;top:17.8px;" width="1" height="1"><text x="0" y="0" font-size="11.73" fill="#141414" textLength="17.6" lengthAdjust="spacing">Rib</text></svg>
<svg class="abs" style="left:640.8px;top:31.799999999999997px;" width="18.6" height="16.6" viewBox="0 0 18.6 16.6"><path d="M0.5,3 L13.7,0.6 L18.1,8 L12.2,9.6Z" fill="#86c6e6" stroke="#163f5d" stroke-width="1.1" stroke-linejoin="round"/>
<path d="M0.5,3 L12.2,9.6 L12.2,16 L0.9,13Z" fill="#2f86ba" stroke="#163f5d" stroke-width="1.1" stroke-linejoin="round"/>
<path d="M12.2,9.6 L18.1,8 L17.7,14 L12.2,16Z" fill="#f8f8f8" stroke="#333333" stroke-width="1.1" stroke-linejoin="round"/></svg>
<svg class="abs tx " style="left:665.5px;top:43.8px;" width="1" height="1"><text x="0" y="0" font-size="12.24" fill="#141414" textLength="27.0" lengthAdjust="spacing">Draft</text></svg>
<svg class="abs" style="left:641px;top:57px;" width="18" height="18.8" viewBox="0 0 18 18.8"><path d="M0.6,3.2 L9.6,0.6 L17.4,3.7 L7.2,6.8Z" fill="#f6f6f6" stroke="#333333" stroke-width="1.1" stroke-linejoin="round"/>
<path d="M0.6,3.2 L7.2,6.8 L7.2,18.2 L0.9,13.6Z" fill="#ececec" stroke="#333333" stroke-width="1.1" stroke-linejoin="round"/>
<path d="M7.2,6.8 L17.4,3.7 L17.4,13.6 L7.2,18.2Z" fill="#f6f6f6" stroke="#333333" stroke-width="1.1" stroke-linejoin="round"/>
<path d="M9,8 L15.8,5.9 L15.8,12.6 L9,15.8Z" fill="#3d92c6" stroke="#163f5d" stroke-width="1" stroke-linejoin="round"/><path d="M11.6,7.3V12.4L15.8,10.8M11.6,12.4L9,15.6" fill="none" stroke="#163f5d" stroke-width=".9"/><path d="M9.6,8.6L11,8.2V12.2L9.6,14Z" fill="#86c6e6"/></svg>
<svg class="abs tx " style="left:665.5px;top:69.8px;" width="1" height="1"><text x="0" y="0" font-size="11.69" fill="#141414" textLength="26.0" lengthAdjust="spacing">Shell</text></svg>
<svg class="abs" style="left:704.5px;top:5px;" width="19" height="18.5" viewBox="0 0 20 20"><path d="M1,4 C1,0.5 19,0.5 19,4 L19,15 C19,19 1,19 1,15Z" fill="#f4f4f4" stroke="#333333" stroke-width="1.3"/><path d="M1,4C1,7.5 19,7.5 19,4" fill="none" stroke="#333333" stroke-width="1.3"/><path d="M2.5,9.5 C6,10.8 8,11 9,11 L9,16 C7,16 5,15.7 2.5,14.5Z M11,11 C13,11 15,10.7 17.5,9.5 L17.5,14.5 C15,15.6 13,16 11,16Z" fill="#3d92c6" stroke="#163f5d" stroke-width="1.15"/><path d="M5,12.2h2.5v2H5zM12.5,12.4h2.7v1.8h-2.7z" fill="#d8eef9"/></svg>
<svg class="abs tx " style="left:729.5px;top:17.8px;" width="1" height="1"><text x="0" y="0" font-size="12.06" fill="#141414" textLength="28.6" lengthAdjust="spacing">Wrap</text></svg>
<svg class="abs" style="left:705px;top:31px;" width="18.5" height="18.5" viewBox="0 0 20 20"><path d="M1,9 L7,7 L7,12 L14,14 L19,10 L19,14 L12,18.5 L1,16Z" fill="#3d92c6" stroke="#163f5d" stroke-width="1.3"/><path d="M6,4 L11,1 L17.5,3 L17.5,9.5 L12.5,13 L6,11Z" fill="#f4f4f4" stroke="#333333" stroke-width="1.3"/><path d="M6,4L12.5,6V13M12.5,6L17.5,3" fill="none" stroke="#333333" stroke-width="1.3"/><path d="M1.5,14C4,15.5 8,16.5 12,17" fill="none" stroke="#86c6e6" stroke-width="1.3"/></svg>
<svg class="abs tx " style="left:729.5px;top:43.8px;" width="1" height="1"><text x="0" y="0" font-size="11.99" fill="#141414" textLength="46.0" lengthAdjust="spacing">Intersect</text></svg>
<svg class="abs" style="left:705.5px;top:57px;" width="18" height="20" viewBox="0 0 20 20"><path d="M1,5h5v2.5h2.5v4H6V16H1Z" fill="#3d92c6" stroke="#163f5d" stroke-width="1.3"/><path d="M19,5h-5v2.5h-2v4h2V16h5Z" fill="#f4f4f4" stroke="#333333" stroke-width="1.3"/><path d="M10,0.5V19.5" stroke="#fff" stroke-width="2.4"/><path d="M10,0.5V19.5" stroke="#111" stroke-width="1.3"/></svg>
<svg class="abs tx " style="left:729.5px;top:69.8px;" width="1" height="1"><text x="0" y="0" font-size="12.24" fill="#141414" textLength="34.3" lengthAdjust="spacing">Mirror</text></svg>
<svg class="abs" style="left:809px;top:5.5px;" width="19" height="20" viewBox="0 0 20 20"><path d="M7,5 L18,2 L18,15 L7,18.5Z" fill="#3d92c6" stroke="#163f5d" stroke-width="1.3"/><path d="M12.5,3.5V17" stroke="#e8f4fb" stroke-width="3"/><path d="M12.5,0.5V19.5" stroke="#111" stroke-width="1.1" stroke-dasharray="3,1.6"/><circle cx="3.3" cy="3.3" r="2.3" fill="#86c6e6" stroke="#163f5d" stroke-width="1.1"/></svg>
<svg class="abs tx " style="left:793.0px;top:37.6px;" width="1" height="1"><text x="0" y="0" font-size="11.44" fill="#141414" textLength="52.8" lengthAdjust="spacing">Reference</text></svg><svg class="abs tx " style="left:793.0px;top:52.6px;" width="1" height="1"><text x="0" y="0" font-size="12.03" fill="#141414" textLength="52.8" lengthAdjust="spacing">Geometry</text></svg><svg class="abs" style="left:815.0px;top:66.5px" width="7" height="4" viewBox="0 0 7 4"><path d="M0,0H7L3.5,4Z" fill="#3c3c3c"/></svg>
<svg class="abs" style="left:863.5px;top:6px;" width="19.5" height="19.5" viewBox="0 0 20 20"><path d="M2.5,1 C6,3 6,6 3.5,10 C1,15 5.5,19.5 10,17.5 C14.5,15.5 12,11 13.5,7 C14.5,4 16,2.5 18.5,1.5" fill="none" stroke="#2f7fb0" stroke-width="1.6" stroke-linecap="round"/></svg>
<svg class="abs tx " style="left:854.7px;top:37.6px;" width="1" height="1"><text x="0" y="0" font-size="11.62" fill="#141414" textLength="36.8" lengthAdjust="spacing">Curves</text></svg><svg class="abs" style="left:869.0px;top:66.5px" width="7" height="4" viewBox="0 0 7 4"><path d="M0,0H7L3.5,4Z" fill="#3c3c3c"/></svg>
<svg class="abs" style="left:919.5px;top:6px;" width="19.5" height="19.5" viewBox="0 0 20 20"><path d="M5,1 L19,8 L17.5,13 L3.5,5.5Z" fill="#f2cf2b" stroke="#8a6d0b" stroke-width="1"/><path d="M7.5,2.6v3M10.2,4v2.4M13,5.4v3M15.7,6.8v2.4" stroke="#3b3000" stroke-width="1.3"/><path d="M1,8.5 L3,6.5 L12,13 L13.8,11 L17.5,19 L8.5,17.5 L10.3,15.5Z" fill="#2f86ba" stroke="#163f5d" stroke-width="1.15"/></svg>
<svg class="abs tx " style="left:903.5px;top:37.6px;" width="1" height="1"><text x="0" y="0" font-size="11.8" fill="#141414" textLength="50.5" lengthAdjust="spacing">Instant3D</text></svg></div>
<div id="tabs"><div class="abs" style="left:0px;top:0;width:60px;height:24px;background:#b5b5b5"></div>
<svg class="abs tx " style="left:4.1px;top:17.0px;" width="1" height="1"><text x="0" y="0" font-size="12.52" fill="#2e2e2e" font-weight="bold" textLength="52.2" lengthAdjust="spacing">Features</text></svg>
<div class="abs" style="left:60px;top:1px;width:1px;height:23px;background:#8f8f8f"></div>
<svg class="abs tx " style="left:68.5px;top:17.0px;" width="1" height="1"><text x="0" y="0" font-size="12.3" fill="#222" textLength="37.6" lengthAdjust="spacing">Sketch</text></svg>
<div class="abs" style="left:115.2px;top:1px;width:1px;height:23px;background:#8f8f8f"></div>
<svg class="abs tx " style="left:120.7px;top:17.0px;" width="1" height="1"><text x="0" y="0" font-size="12.44" fill="#222" textLength="49.1" lengthAdjust="spacing">Surfaces</text></svg>
<div class="abs" style="left:175px;top:1px;width:1px;height:23px;background:#8f8f8f"></div>
<svg class="abs tx " style="left:178.8px;top:17.0px;" width="1" height="1"><text x="0" y="0" font-size="13.01" fill="#222" textLength="69.4" lengthAdjust="spacing">Sheet Metal</text></svg>
<div class="abs" style="left:251.3px;top:1px;width:1px;height:23px;background:#8f8f8f"></div>
<svg class="abs tx " style="left:253.8px;top:17.0px;" width="1" height="1"><text x="0" y="0" font-size="12.74" fill="#222" textLength="97.7" lengthAdjust="spacing">Structure System</text></svg>
<div class="abs" style="left:353px;top:1px;width:1px;height:23px;background:#8f8f8f"></div>
<svg class="abs tx " style="left:357.7px;top:17.0px;" width="1" height="1"><text x="0" y="0" font-size="12.92" fill="#222" textLength="64.4" lengthAdjust="spacing">Weldments</text></svg>
<div class="abs" style="left:426px;top:1px;width:1px;height:23px;background:#8f8f8f"></div>
<svg class="abs tx " style="left:429.8px;top:17.0px;" width="1" height="1"><text x="0" y="0" font-size="13.26" fill="#222" textLength="88.0" lengthAdjust="spacing">Data Migration</text></svg>
<div class="abs" style="left:520.6px;top:1px;width:1px;height:23px;background:#8f8f8f"></div>
<svg class="abs tx " style="left:524.7px;top:17.0px;" width="1" height="1"><text x="0" y="0" font-size="13.13" fill="#222" textLength="78.1" lengthAdjust="spacing">Direct Editing</text></svg>
<div class="abs" style="left:606.2px;top:1px;width:1px;height:23px;background:#8f8f8f"></div>
<svg class="abs tx " style="left:611.7px;top:17.0px;" width="1" height="1"><text x="0" y="0" font-size="13.26" fill="#222" textLength="44.8" lengthAdjust="spacing">Markup</text></svg>
<div class="abs" style="left:662px;top:1px;width:1px;height:23px;background:#8f8f8f"></div>
<svg class="abs tx " style="left:667.8px;top:17.0px;" width="1" height="1"><text x="0" y="0" font-size="12.26" fill="#222" textLength="47.7" lengthAdjust="spacing">Evaluate</text></svg>
<div class="abs" style="left:721.4px;top:1px;width:1px;height:23px;background:#8f8f8f"></div>
<svg class="abs tx " style="left:723.9px;top:17.0px;" width="1" height="1"><text x="0" y="0" font-size="12.88" fill="#222" textLength="151.1" lengthAdjust="spacing">Lifecycle and Collaborati...</text></svg>
<div class="abs" style="left:876px;top:1px;width:1px;height:23px;background:#8f8f8f"></div>
<svg class="abs tx " style="left:876.8px;top:17.0px;" width="1" height="1"><text x="0" y="0" font-size="12.35" fill="#222" textLength="129.0" lengthAdjust="spacing">SOLIDWORKS Add-Ins</text></svg></div>
<div id="panel"><div class="abs" style="left:0px;top:4px;width:348px;height:1px;background:#8d8d8d"></div>
<div class="abs" style="left:0px;top:5px;width:348px;height:1px;background:#bdbdbd"></div>
<div class="abs" style="left:0px;top:21px;width:348px;height:1px;background:#9a9a9a"></div>
<div class="abs" style="left:170px;top:9.5px;width:7px;height:7px;border-radius:50%;border:1px solid #d2d2d2;background:#b9b9b9"></div>
<div class="abs" style="left:1.5px;top:26.30000000000001px;width:40px;height:26px;background:#b8b8b8;border:1px solid #a2a2a2;border-bottom:none"></div>
<div class="abs" style="left:41.3px;top:26.30000000000001px;width:40.3px;height:25.2px;background:#a5a5a5;border:1px solid #979797;border-left-color:#9a9a9a"></div>
<div class="abs" style="left:81.3px;top:26.30000000000001px;width:40.3px;height:25.2px;background:#a5a5a5;border:1px solid #979797;border-left-color:#9a9a9a"></div>
<div class="abs" style="left:121.7px;top:26.30000000000001px;width:40.3px;height:25.2px;background:#a5a5a5;border:1px solid #979797;border-left-color:#9a9a9a"></div>
<div class="abs" style="left:161.3px;top:26.30000000000001px;width:40.3px;height:25.2px;background:#a5a5a5;border:1px solid #979797;border-left-color:#9a9a9a"></div>
<div class="abs" style="left:41.3px;top:51px;width:307px;height:1px;background:#979797"></div>
<div class="abs" style="left:249.3px;top:26.30000000000001px;width:25px;height:25px;background:#b9b9b9;border-left:1px solid #a9a9a9"></div>
<div class="abs" style="left:274.3px;top:26.30000000000001px;width:25.7px;height:25px;background:#a8a8a8"></div>
<svg class="abs" style="left:14px;top:30px;" width="17" height="18" viewBox="0 0 17 18"><path d="M0.3,5.4 L3.3,4.6 L3.3,2 L8.1,0.3 L12.6,1.7 L12.9,6.9 L16.7,8.3 L16.7,14.6 L11.5,17.7 L0.3,9.5Z" fill="none" stroke="#fff" stroke-opacity=".6" stroke-width="2.6" stroke-linejoin="round"/><path d="M0.3,5.4 L3.3,4.6 L8,10.4 L12.9,6.9 L16.7,8.3 L11.5,12.7Z" fill="#fcea93" stroke="#5a4306" stroke-width="1.1" stroke-linejoin="round"/><path d="M0.3,5.4 L11.5,12.7 L11.5,17.7 L0.3,9.5Z" fill="#efc21d" stroke="#5a4306" stroke-width="1.1" stroke-linejoin="round"/><path d="M11.5,12.7 L16.7,8.3 L16.7,14.6 L11.5,17.7Z" fill="#f8dd58" stroke="#5a4306" stroke-width="1.1" stroke-linejoin="round"/><path d="M3.3,2 L7.7,4.3 L7.7,10.2 L3.3,7.3Z" fill="#efc21d" stroke="#5a4306" stroke-width="1.1" stroke-linejoin="round"/><path d="M7.7,4.3 L12.6,1.7 L12.9,6.9 L7.7,10.2Z" fill="#f8dd58" stroke="#5a4306" stroke-width="1.1" stroke-linejoin="round"/><path d="M3.3,2 L8.1,0.3 L12.6,1.7 L7.7,4.3Z" fill="#fcea93" stroke="#5a4306" stroke-width="1.1" stroke-linejoin="round"/></svg>
<svg class="abs" style="left:53px;top:30px;" width="18" height="18" viewBox="0 0 18 18"><rect x=".6" y=".6" width="16.8" height="16.8" rx="1.5" fill="#f6f6f6" stroke="#163f5d" stroke-width="1.2"/><rect x=".6" y=".6" width="16.8" height="3" fill="#58a9d6" stroke="#163f5d" stroke-width="1"/><g fill="#3d92c6" stroke="#163f5d" stroke-width=".6"><rect x="2.8" y="5.8" width="3.6" height="2.2"/><rect x="2.8" y="9.6" width="3.6" height="2.2"/><rect x="2.8" y="13.4" width="3.6" height="2.2"/></g><path d="M8.2,6.9H15.5M8.2,10.7H15.5M8.2,14.5H15.5" stroke="#222" stroke-width="1.2"/></svg>
<svg class="abs" style="left:95px;top:30px;" width="15" height="18" viewBox="0 0 15 18"><path d="M2,0.5V17.5M2,4.5H7M2,13.5H8.5" fill="none" stroke="#222" stroke-width="1.6"/><path d="M2,0.8V17.2" stroke="#eee" stroke-width=".5"/><rect x="6.8" y="1.5" width="5.2" height="5.6" fill="#f4f4f4" stroke="#222" stroke-width="1.1"/><rect x="8.8" y="10.5" width="5.2" height="5.6" fill="#f4f4f4" stroke="#222" stroke-width="1.1"/></svg>
<svg class="abs" style="left:132.5px;top:29.5px;" width="19" height="19" viewBox="0 0 19 19"><circle cx="9.5" cy="9.5" r="6" fill="none" stroke="#111" stroke-width="1.8"/><path d="M9.5,0V19M0,9.5H19" stroke="#111" stroke-width="1.8"/></svg>
<svg class="abs" style="left:172.5px;top:28.5px;" width="19" height="19" viewBox="0 0 19 19"><defs><clipPath id="bc"><circle cx="9.5" cy="9.5" r="9"/></clipPath><radialGradient id="bs" cx=".35" cy=".3" r=".8"><stop offset="0" stop-color="#fff" stop-opacity=".55"/><stop offset=".5" stop-color="#fff" stop-opacity="0"/><stop offset="1" stop-color="#000" stop-opacity=".25"/></radialGradient></defs><g clip-path="url(#bc)"><rect width="19" height="19" fill="#e0261c"/><path d="M0,0H9.5V10H0Z" fill="#3b7fd9"/><path d="M0,10H8V19H0Z" fill="#3fae3a"/><path d="M7,11 L19,8.5 V19 H7Z" fill="#f4c21f"/><path d="M8,0 L19,0 19,9 9.5,10.5Z" fill="#d92a1e"/><ellipse cx="13.2" cy="5.8" rx="2.6" ry="4.3" transform="rotate(-28 13.2 5.8)" fill="#1c0d0c"/></g><circle cx="9.5" cy="9.5" r="9" fill="url(#bs)"/></svg>
<svg class="abs" style="left:232px;top:32px;" width="8" height="12" viewBox="0 0 8 12"><path d="M7,1 L1.5,6 L7,11" fill="none" stroke="#111" stroke-width="2.3"/></svg>
<svg class="abs" style="left:252.5px;top:28.5px;" width="19" height="19" viewBox="0 0 19 19"><circle cx="7" cy="7" r="6.2" fill="#ececec" stroke="#2a2a2a" stroke-width="1.1"/><path d="M3,3.5L7,7H10.5" fill="none" stroke="#2a2a2a" stroke-width="1.1"/><circle cx="7" cy="7" r="1" fill="#2a2a2a"/><rect x="9.3" y="11.3" width="9" height="7" rx=".8" fill="#56a9d8" stroke="#fff" stroke-width="1.6"/><path d="M11.2,11.5V9.5C11.2,6.3 16.4,6.3 16.4,9.5V11.5" fill="none" stroke="#fff" stroke-width="3"/><rect x="9.3" y="11.3" width="9" height="7" rx=".8" fill="#56a9d8" stroke="#163f5d" stroke-width="1"/><path d="M11.2,11.5V9.5C11.2,6.3 16.4,6.3 16.4,9.5V11.5" fill="none" stroke="#163f5d" stroke-width="1.5"/></svg>
<svg class="abs" style="left:279.5px;top:28.5px;" width="17" height="18" viewBox="0 0 17 18"><path d="M8.5,0.5 L16.5,3.5 L16.5,13 L8,17.5 L0.5,13 L0.5,4Z" fill="#333"/><path d="M1.2,4.8L8,8.5V16.5L1.2,12.5Z" fill="#2fae3a"/><path d="M1.8,4L8.5,1.3L15.5,3.8L8.3,7.6Z" fill="#3566c9"/><path d="M8.5,1.3L15.5,3.8 12,6Z" fill="#d92a2a"/><path d="M9,8.4L15.8,4.8V12.6L9,16.4Z" fill="#f08a1c"/><path d="M9,12L15.8,9 15.8,12.6 9,16.4Z" fill="#f2cc1f"/><path d="M8.5,0.5 L16.5,3.5 L16.5,13 L8,17.5 L0.5,13 L0.5,4Z M0.5,4L8.5,8L16.5,3.5M8.5,8L8,17.5" fill="none" stroke="#2a2a2a" stroke-width="1.1"/></svg>
<div class="abs" style="left:5.2px;top:52.599999999999994px;width:236.5px;height:27.8px;background:#b7b7b7;border:1px solid #8c8c8c;border-right-color:#9c9c9c;border-bottom-color:#9c9c9c"></div>
<svg class="abs" style="left:7.8px;top:57.5px;" width="17.6" height="18.5" viewBox="0 0 17.6 18.5"><path d="M1,3.5 L7.3,10.5 V16 L10,17.5 V10.5 L16.5,3.5Z" fill="#f8f8f8" stroke="#2a2a2a" stroke-width="1.2" stroke-linejoin="round"/><ellipse cx="8.8" cy="2.6" rx="8" ry="2.1" fill="#59b0dd" stroke="#163f5d" stroke-width="1"/></svg>
<div class="abs" style="left:246.7px;top:52px;width:1px;height:677px;background:#bdbdbd"></div>
<div class="abs" style="left:274.6px;top:52px;width:1px;height:677px;background:#bdbdbd"></div>
<div class="abs" style="left:298.6px;top:52px;width:1px;height:677px;background:#bdbdbd"></div>
<div class="abs" style="left:321.6px;top:52px;width:1px;height:677px;background:#bdbdbd"></div>
<div class="abs" style="left:247px;top:77px;width:101px;height:1px;background:#c0c0c0"></div>
<svg class="abs" style="left:250.5px;top:54.5px;" width="19" height="19.5" viewBox="0 0 19 19.5"><path d="M1,1 H11 L13.5,3.5 V14 H1Z" fill="#3c3c3c"/><rect x="3.5" y="2" width="7" height="4.8" fill="#e8e8e8"/><rect x="7.8" y="2.6" width="1.8" height="3.4" fill="#3c3c3c"/><path d="M3,9.3H11.5M3,11.5H11.5" stroke="#e8e8e8" stroke-width="1"/><path d="M7.5,13 L11,16.5 L18,9" fill="none" stroke="#fff" stroke-width="4"/><path d="M7.5,13 L11,16.5 L18,9" fill="none" stroke="#3a9a1e" stroke-width="2.3"/></svg>
<svg class="abs" style="left:279.5px;top:54.5px;" width="14" height="18.5" viewBox="0 0 14 18.5"><rect x=".5" y="7" width="13" height="11" rx="1" fill="#454545"/><path d="M3,7.5V5.5C3,-.2 11,-.2 11,5.5V7.5" fill="none" stroke="#454545" stroke-width="2"/><circle cx="7" cy="11.5" r="1.5" fill="#f2f2f2"/><rect x="6.2" y="11.5" width="1.6" height="4" fill="#f2f2f2"/></svg>
<svg class="abs" style="left:307.5px;top:55px;" width="8" height="18" viewBox="0 0 8 18"><circle cx="4" cy="3.4" r="2.7" fill="#c4c4c4" stroke="#111" stroke-width="1.7"/><circle cx="4" cy="14.6" r="2.7" fill="#c4c4c4" stroke="#111" stroke-width="1.7"/><path d="M4,6V12" stroke="#111" stroke-width="2.2"/></svg>
<svg class="abs" style="left:325.5px;top:55px;" width="19" height="18.5" viewBox="0 0 19 18.5"><circle cx="4" cy="3.4" r="2.7" fill="#c4c4c4" stroke="#111" stroke-width="1.7"/><circle cx="4" cy="14.6" r="2.7" fill="#c4c4c4" stroke="#111" stroke-width="1.7"/><path d="M4,6V12" stroke="#111" stroke-width="2.2"/><circle cx="13.5" cy="12.5" r="5.6" fill="#f0901e"/><path d="M14,9.5V13.5H11.5" fill="none" stroke="#fff" stroke-width="1.2"/></svg>
<svg class="abs" style="left:4.8px;top:83.80000000000001px;" width="17" height="18" viewBox="0 0 17 18"><path d="M0.3,5.4 L3.3,4.6 L3.3,2 L8.1,0.3 L12.6,1.7 L12.9,6.9 L16.7,8.3 L16.7,14.6 L11.5,17.7 L0.3,9.5Z" fill="none" stroke="#fff" stroke-opacity=".6" stroke-width="2.6" stroke-linejoin="round"/><path d="M0.3,5.4 L3.3,4.6 L8,10.4 L12.9,6.9 L16.7,8.3 L11.5,12.7Z" fill="#fcea93" stroke="#5a4306" stroke-width="1.1" stroke-linejoin="round"/><path d="M0.3,5.4 L11.5,12.7 L11.5,17.7 L0.3,9.5Z" fill="#efc21d" stroke="#5a4306" stroke-width="1.1" stroke-linejoin="round"/><path d="M11.5,12.7 L16.7,8.3 L16.7,14.6 L11.5,17.7Z" fill="#f8dd58" stroke="#5a4306" stroke-width="1.1" stroke-linejoin="round"/><path d="M3.3,2 L7.7,4.3 L7.7,10.2 L3.3,7.3Z" fill="#efc21d" stroke="#5a4306" stroke-width="1.1" stroke-linejoin="round"/><path d="M7.7,4.3 L12.6,1.7 L12.9,6.9 L7.7,10.2Z" fill="#f8dd58" stroke="#5a4306" stroke-width="1.1" stroke-linejoin="round"/><path d="M3.3,2 L8.1,0.3 L12.6,1.7 L7.7,4.3Z" fill="#fcea93" stroke="#5a4306" stroke-width="1.1" stroke-linejoin="round"/></svg>
<svg class="abs tx " style="left:26.8px;top:98.6px;" width="1" height="1"><text x="0" y="0" font-size="12.88" fill="#141414" textLength="218.7" lengthAdjust="spacing">Dash Bezel (Default) &lt;&lt;Default&gt;_Disp</text></svg>
<div class="abs" style="left:0px;top:104px;width:246px;height:3.2px;background:#f0b323"></div>
<svg class="abs" style="left:250px;top:83px;" width="19" height="19.5" viewBox="0 0 19 19.5"><path d="M4,0.5H14L17.5,8V12H0.5V8Z" fill="#c2c2c2" stroke="#d6d6d6" stroke-width="1"/><path d="M0.5,8H17.5" stroke="#d6d6d6" stroke-width="1"/><rect x="7" y="7" width="11.5" height="12" fill="#f7941d" stroke="#fbe0b8" stroke-width=".8"/><rect x="9.3" y="7.6" width="6.8" height="4" fill="#fde9cc"/><rect x="13.2" y="8.2" width="1.6" height="2.8" fill="#f7941d"/><path d="M9,14.3H16.5M9,16.5H16.5" stroke="#fde9cc" stroke-width="1.1"/></svg>
<svg class="abs" style="left:277.5px;top:83.5px;" width="19" height="18.5" viewBox="0 0 19.5 18.5"><path d="M1,16 L9,8.5 C8,5 10,1.5 13.5,1 C17,0.8 19,3.5 18.3,6.5 C17.5,9.5 14.5,11 11.5,10.3 L10,11.8 L8.5,11.5 L8.2,13.3 L6.5,13.2 L6.2,15 L4.5,15 L3,17.5 L1,17.5Z" fill="#55b848"/><circle cx="14.8" cy="4.6" r="1.3" fill="#a8dca0"/></svg>
<svg class="abs tx " style="left:308.5px;top:99.0px;" width="1" height="1"><text x="0" y="0" font-size="12.5" fill="#222">A</text></svg>
<svg class="abs" style="left:327.3px;top:86px;" width="16" height="14" viewBox="0 0 16 14"><path d="M1,8 L5.5,12 L15,1.5" fill="none" stroke="#3a9a1e" stroke-width="2.6"/></svg>
<svg class="abs tx " style="left:49.7px;top:123.0px;" width="1" height="1"><text x="0" y="0" font-size="13.26" fill="#141414" textLength="41.8" lengthAdjust="spacing">History</text></svg>
<svg class="abs" style="left:10px;top:112.5px;" width="4.2" height="7" viewBox="0 0 4.2 7"><path d="M0,0L4.2,3.5L0,7Z" fill="#6a6a6a"/></svg>
<svg class="abs" style="left:27px;top:109.69999999999999px;" width="18" height="16.5" viewBox="0 0 18 16.5"><path d="M.6,3.5 V.8 H6.5 L8,3.5Z" fill="#f4f4f4" stroke="#3a3a3a" stroke-width="1"/><rect x=".6" y="3.5" width="16.8" height="12.4" rx="1" fill="#f8f8f8" stroke="#3a3a3a" stroke-width="1.1"/><path d="M5.5,9.5A4,4 0 1 1 7.2,13" fill="#eef6fb" stroke="#2a7fb8" stroke-width="1.5"/><path d="M3.3,8.3L5.6,11.4L7.9,8.5Z" fill="#2a7fb8"/><path d="M9.5,7.5V10H11.5" fill="none" stroke="#222" stroke-width="1"/></svg>
<svg class="abs tx " style="left:49.7px;top:147.0px;" width="1" height="1"><text x="0" y="0" font-size="12.62" fill="#141414" textLength="46.3" lengthAdjust="spacing">Sensors</text></svg>
<svg class="abs" style="left:27px;top:133.7px;" width="18" height="16.5" viewBox="0 0 18 16.5"><path d="M.6,3.5 V.8 H6.5 L8,3.5Z" fill="#f4f4f4" stroke="#3a3a3a" stroke-width="1"/><rect x=".6" y="3.5" width="16.8" height="12.4" rx="1" fill="#f8f8f8" stroke="#3a3a3a" stroke-width="1.1"/><circle cx="9" cy="9.8" r="4.6" fill="#fdfdfd" stroke="#222" stroke-width="1.1"/><path d="M9,9.8L12,6.8" stroke="#d7301f" stroke-width="1.5"/><path d="M9,9.8 L12.6,12.3 A4.4,4.4 0 0 0 13.5,9.5Z" fill="#d7301f"/><path d="M5.5,11.5A4,4 0 0 1 7,6.3" fill="none" stroke="#2a7fb8" stroke-width="1.3"/></svg>
<svg class="abs tx " style="left:49.7px;top:171.0px;" width="1" height="1"><text x="0" y="0" font-size="13.12" fill="#141414" textLength="69.3" lengthAdjust="spacing">Annotations</text></svg>
<svg class="abs" style="left:10px;top:160.5px;" width="4.2" height="7" viewBox="0 0 4.2 7"><path d="M0,0L4.2,3.5L0,7Z" fill="#6a6a6a"/></svg>
<svg class="abs" style="left:27px;top:157.7px;" width="18" height="16.5" viewBox="0 0 18 16.5"><path d="M.6,3.5 V.8 H6.5 L8,3.5Z" fill="#f4f4f4" stroke="#3a3a3a" stroke-width="1"/><rect x=".6" y="3.5" width="16.8" height="12.4" rx="1" fill="#f8f8f8" stroke="#3a3a3a" stroke-width="1.1"/><text x="9" y="14.4" text-anchor="middle" font-family="Liberation Serif,serif" font-weight="bold" font-size="12.5" fill="#2a7fb8">A</text></svg>
<svg class="abs tx " style="left:49.7px;top:195.0px;" width="1" height="1"><text x="0" y="0" font-size="12.9" fill="#141414" textLength="87.5" lengthAdjust="spacing">Solid Bodies(1)</text></svg>
<svg class="abs" style="left:10px;top:184.5px;" width="4.2" height="7" viewBox="0 0 4.2 7"><path d="M0,0L4.2,3.5L0,7Z" fill="#6a6a6a"/></svg>
<svg class="abs" style="left:27px;top:181.7px;" width="18" height="16.5" viewBox="0 0 18 16.5"><path d="M.6,3.5 V.8 H6.5 L8,3.5Z" fill="#f4f4f4" stroke="#3a3a3a" stroke-width="1"/><rect x=".6" y="3.5" width="16.8" height="12.4" rx="1" fill="#f8f8f8" stroke="#3a3a3a" stroke-width="1.1"/><path d="M9,5.2 L13,6.8 V11.8 L9,14 L5,11.8 V6.8Z" fill="#3d92c6" stroke="#163f5d" stroke-width="1"/><path d="M5,6.8L9,8.8L13,6.8M9,8.8V14" fill="none" stroke="#163f5d" stroke-width=".9"/></svg>
<svg class="abs tx " style="left:49.7px;top:219.0px;" width="1" height="1"><text x="0" y="0" font-size="12.91" fill="#141414" textLength="57.4" lengthAdjust="spacing">Equations</text></svg>
<svg class="abs" style="left:27px;top:205.7px;" width="18" height="16.5" viewBox="0 0 18 16.5"><path d="M.6,3.5 V.8 H6.5 L8,3.5Z" fill="#f4f4f4" stroke="#3a3a3a" stroke-width="1"/><rect x=".6" y="3.5" width="16.8" height="12.4" rx="1" fill="#f8f8f8" stroke="#3a3a3a" stroke-width="1.1"/><text x="9" y="14.2" text-anchor="middle" font-family="Liberation Serif,serif" font-size="12.5" fill="#111">Σ</text></svg>
<svg class="abs tx " style="left:49.7px;top:243.0px;" width="1" height="1"><text x="0" y="0" font-size="12.87" fill="#141414" textLength="171.7" lengthAdjust="spacing">Thornel VCB-20 Carbon Cloth</text></svg>
<svg class="abs" style="left:26.2px;top:227.0px;" width="19" height="18.5" viewBox="0 0 19 18.5"><circle cx="2.8" cy="2.6" r="2" fill="#fff" stroke="#333" stroke-width=".9"/><circle cx="2.8" cy="8.6" r="2" fill="#6db6e3" stroke="#1c5377" stroke-width=".9"/><circle cx="2.8" cy="14.6" r="2" fill="#f2c21f" stroke="#8a6a10" stroke-width=".9"/><path d="M7,2.6H17.5M7,8.6H17.5M6.5,14.6H10.5" stroke="#222" stroke-width="1.7"/><circle cx="14.2" cy="14.2" r="3.5" fill="none" stroke="#1d1d1d" stroke-width="1.7" stroke-dasharray="1.45,1.3"/><circle cx="14.2" cy="14.2" r="3" fill="#1d1d1d"/><circle cx="14.2" cy="14.2" r="1" fill="#c8c8c8"/></svg>
<svg class="abs tx " style="left:49.7px;top:267.0px;" width="1" height="1"><text x="0" y="0" font-size="12.65" fill="#141414" textLength="65.4" lengthAdjust="spacing">Front Plane</text></svg>
<svg class="abs" style="left:29px;top:253.0px;" width="14.5" height="19.5" viewBox="0 0 14.5 19.5"><path d="M1,4 L13.5,1.5 V15 L1,18Z" fill="#d2d2d2" fill-opacity=".5" stroke="#333" stroke-width="1"/><path d="M7.3,0V19.5" stroke="#111" stroke-width="1.1" stroke-dasharray="3.2,1.8"/></svg>
<svg class="abs tx " style="left:49.7px;top:291.0px;" width="1" height="1"><text x="0" y="0" font-size="13.11" fill="#141414" textLength="58.3" lengthAdjust="spacing">Top Plane</text></svg>
<svg class="abs" style="left:29px;top:277.0px;" width="14.5" height="19.5" viewBox="0 0 14.5 19.5"><path d="M1,4 L13.5,1.5 V15 L1,18Z" fill="#d2d2d2" fill-opacity=".5" stroke="#333" stroke-width="1"/><path d="M7.3,0V19.5" stroke="#111" stroke-width="1.1" stroke-dasharray="3.2,1.8"/></svg>
<svg class="abs tx " style="left:49.7px;top:315.0px;" width="1" height="1"><text x="0" y="0" font-size="12.65" fill="#141414" textLength="65.4" lengthAdjust="spacing">Right Plane</text></svg>
<svg class="abs" style="left:29px;top:301.0px;" width="14.5" height="19.5" viewBox="0 0 14.5 19.5"><path d="M1,4 L13.5,1.5 V15 L1,18Z" fill="#d2d2d2" fill-opacity=".5" stroke="#333" stroke-width="1"/><path d="M7.3,0V19.5" stroke="#111" stroke-width="1.1" stroke-dasharray="3.2,1.8"/></svg>
<svg class="abs tx " style="left:49.7px;top:339.0px;" width="1" height="1"><text x="0" y="0" font-size="13.26" fill="#141414" textLength="36.8" lengthAdjust="spacing">Origin</text></svg>
<svg class="abs" style="left:27.5px;top:325.0px;" width="18" height="18.5" viewBox="0 0 18 18.5"><path d="M3.5,3V15.5H15" fill="none" stroke="#333" stroke-width="1.1"/><path d="M3.5,0.5L1.3,4.2H5.7Z M17.5,15.5L13.8,13.3V17.7Z" fill="#fafafa" stroke="#333" stroke-width=".9"/><rect x="1.8" y="13.8" width="3.4" height="3.4" fill="#fafafa" stroke="#333" stroke-width=".9"/></svg>
<svg class="abs tx " style="left:49.7px;top:363.0px;" width="1" height="1"><text x="0" y="0" font-size="13.16" fill="#141414" textLength="102.4" lengthAdjust="spacing">Template Extrude</text></svg>
<svg class="abs" style="left:10px;top:352.5px;" width="4.2" height="7" viewBox="0 0 4.2 7"><path d="M0,0L4.2,3.5L0,7Z" fill="#6a6a6a"/></svg>
<svg class="abs" style="left:26.6px;top:349.8px;" width="18.6" height="17.5" viewBox="0 0 20 20"><path d="M8,2 L14,0.8 L19,3.5 L19,15 L13.5,18 L8,15Z" fill="#f4f4f4" stroke="#333333" stroke-width="1.3"/><path d="M13.5,5.5V18M8,2L13.5,5.5L19,3.5" fill="none" stroke="#333333" stroke-width="1.3"/>
<path d="M1,8 L6,5.5 L12,7 L12,13.5 L6.5,16 L1,13.5Z" fill="#3d92c6" stroke="#163f5d" stroke-width="1.3"/><path d="M1,8L6.5,10L12,7M6.5,10V16" fill="none" stroke="#163f5d" stroke-width="1.3"/><path d="M1.6,8.6L6,10.3V15.2L1.6,13.2Z" fill="#86c6e6" opacity=".7"/></svg>
<svg class="abs tx " style="left:49.7px;top:387.0px;" width="1" height="1"><text x="0" y="0" font-size="13.06" fill="#141414" textLength="50.8" lengthAdjust="spacing">Hole Cut</text></svg>
<svg class="abs" style="left:10px;top:376.5px;" width="4.2" height="7" viewBox="0 0 4.2 7"><path d="M0,0L4.2,3.5L0,7Z" fill="#6a6a6a"/></svg>
<svg class="abs" style="left:28.6px;top:373.5px;" width="15.8" height="18" viewBox="0 0 15.8 18"><path d="M0.6,2.2 L11,0.6 L15.2,1.8 L3.6,4.6Z" fill="#f6f6f6" stroke="#333333" stroke-width="1.1" stroke-linejoin="round"/>
<path d="M0.6,2.2 L3.6,4.6 L3.6,17.4 L0.6,15Z" fill="#e6e6e6" stroke="#333333" stroke-width="1.1" stroke-linejoin="round"/>
<path d="M3.6,4.6 L15.2,1.8 L15.2,13.6 L3.6,17.4Z" fill="#f6f6f6" stroke="#333333" stroke-width="1.1" stroke-linejoin="round"/>
<path d="M5.6,6.6 L13.3,4.7 L13.3,12 L5.6,14.5Z" fill="#4a9fd0" stroke="#163f5d" stroke-width="1.1" stroke-linejoin="round"/>
<path d="M8.4,8.4 L11.6,7.6 L11.6,10.8 L8.4,11.8Z M5.8,14.2 L8.4,11.8" fill="none" stroke="#c9e8f8" stroke-width=".9"/></svg>
<svg class="abs tx " style="left:49.7px;top:411.0px;" width="1" height="1"><text x="0" y="0" font-size="13.0" fill="#141414" textLength="134.4" lengthAdjust="spacing">Gauge Volume Extrude</text></svg>
<svg class="abs" style="left:10px;top:400.5px;" width="4.2" height="7" viewBox="0 0 4.2 7"><path d="M0,0L4.2,3.5L0,7Z" fill="#6a6a6a"/></svg>
<svg class="abs" style="left:26.6px;top:397.79999999999995px;" width="18.6" height="17.5" viewBox="0 0 20 20"><path d="M8,2 L14,0.8 L19,3.5 L19,15 L13.5,18 L8,15Z" fill="#f4f4f4" stroke="#333333" stroke-width="1.3"/><path d="M13.5,5.5V18M8,2L13.5,5.5L19,3.5" fill="none" stroke="#333333" stroke-width="1.3"/>
<path d="M1,8 L6,5.5 L12,7 L12,13.5 L6.5,16 L1,13.5Z" fill="#3d92c6" stroke="#163f5d" stroke-width="1.3"/><path d="M1,8L6.5,10L12,7M6.5,10V16" fill="none" stroke="#163f5d" stroke-width="1.3"/><path d="M1.6,8.6L6,10.3V15.2L1.6,13.2Z" fill="#86c6e6" opacity=".7"/></svg>
<svg class="abs tx " style="left:49.7px;top:435.0px;" width="1" height="1"><text x="0" y="0" font-size="12.75" fill="#141414" textLength="108.4" lengthAdjust="spacing">Gauge Edge Fillets</text></svg>
<svg class="abs" style="left:26.8px;top:421.9px;" width="18.6" height="17.4" viewBox="0 0 18.6 17.4"><path d="M0.6,12.6 L0.6,5.6 C0.9,2.6 4,0.7 7,0.6 C8.5,3 9.3,7 9.5,11 L9,16.9Z" fill="#f6f6f6" stroke="#333333" stroke-width="1.1" stroke-linejoin="round"/>
<path d="M9.5,11 L18,7.5 L18,11.6 L9,16.9Z" fill="#ececec" stroke="#333333" stroke-width="1.1" stroke-linejoin="round"/>
<path d="M7,0.6 L16.4,1.5 C17.5,3 18,5 18,7.5 L9.5,11 C9.3,7 8.5,3 7,0.6Z" fill="#3d92c6" stroke="#163f5d" stroke-width="1.1" stroke-linejoin="round"/><path d="M8.6,2.2L15.5,2.8" stroke="#86c6e6" stroke-width="1.3"/></svg>
<svg class="abs tx " style="left:49.7px;top:459.0px;" width="1" height="1"><text x="0" y="0" font-size="12.41" fill="#141414" textLength="60.7" lengthAdjust="spacing">Bezel Fillet</text></svg>
<svg class="abs" style="left:26.8px;top:445.9px;" width="18.6" height="17.4" viewBox="0 0 18.6 17.4"><path d="M0.6,12.6 L0.6,5.6 C0.9,2.6 4,0.7 7,0.6 C8.5,3 9.3,7 9.5,11 L9,16.9Z" fill="#f6f6f6" stroke="#333333" stroke-width="1.1" stroke-linejoin="round"/>
<path d="M9.5,11 L18,7.5 L18,11.6 L9,16.9Z" fill="#ececec" stroke="#333333" stroke-width="1.1" stroke-linejoin="round"/>
<path d="M7,0.6 L16.4,1.5 C17.5,3 18,5 18,7.5 L9.5,11 C9.3,7 8.5,3 7,0.6Z" fill="#3d92c6" stroke="#163f5d" stroke-width="1.1" stroke-linejoin="round"/><path d="M8.6,2.2L15.5,2.8" stroke="#86c6e6" stroke-width="1.3"/></svg>
<div class="abs" style="left:0px;top:464.6px;width:246px;height:3.6px;background:#2b8ed0"></div></div><div class="abs" style="left:351px;top:516px;width:9px;height:42px;background:#b2b2b2;border:1px solid #9d9d9d;border-left:none"></div><div class="abs" style="left:351.5px;top:534px;width:6px;height:6px;border-radius:50%;border:1px solid #dcdcdc;background:#c2c2c2"></div>
</div>
</body></html>
